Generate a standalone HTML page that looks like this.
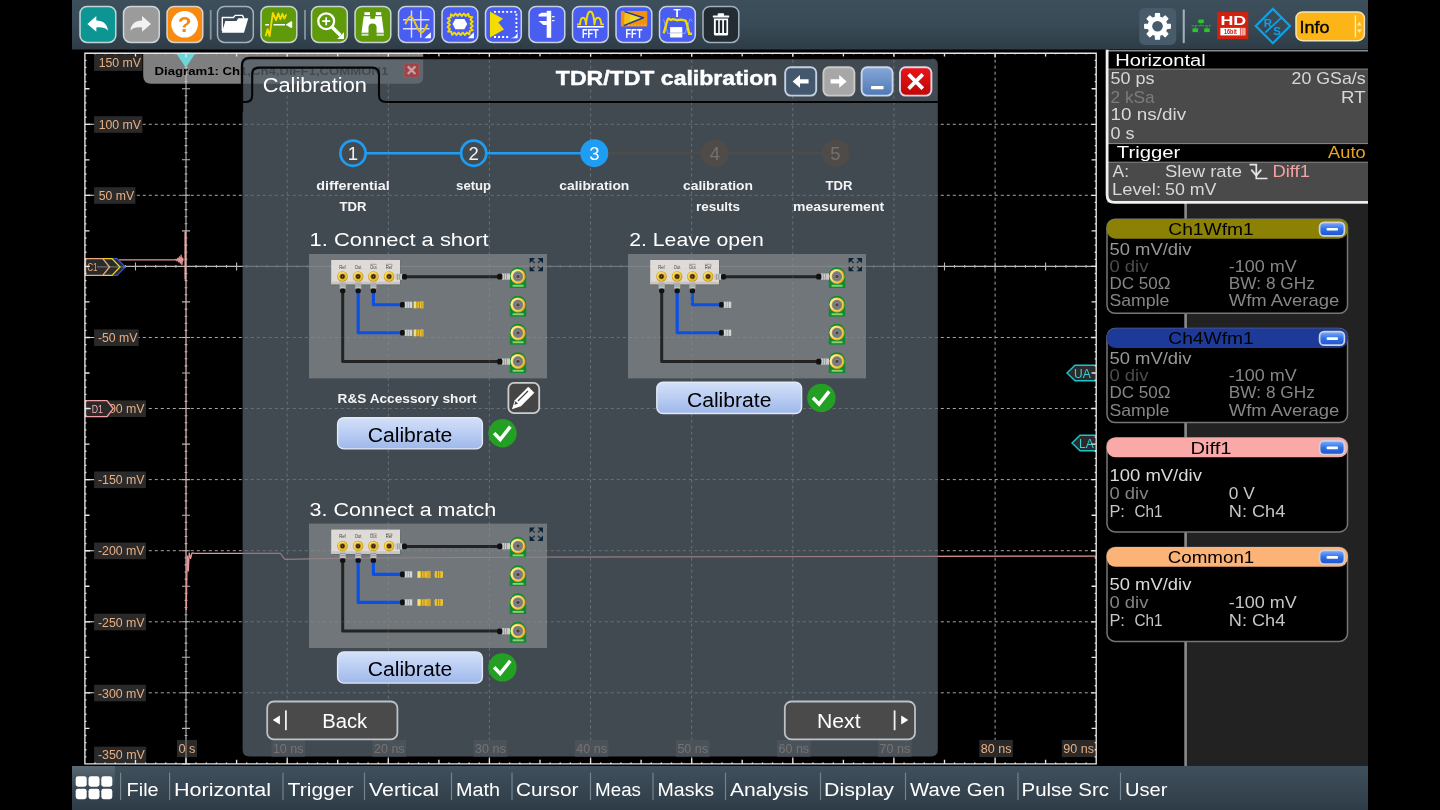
<!DOCTYPE html>
<html><head><meta charset="utf-8"><title>TDR/TDT calibration</title>
<style>
html,body{margin:0;padding:0;background:#000;width:1440px;height:810px;overflow:hidden}
svg{display:block;font-family:"Liberation Sans",sans-serif;will-change:transform}
</style></head><body>
<svg width="1440" height="810" viewBox="0 0 1440 810">

<defs>
<linearGradient id="gTop" x1="0" y1="0" x2="0" y2="1"><stop offset="0" stop-color="#3c4f5b"/><stop offset="0.5" stop-color="#384a56"/><stop offset="1" stop-color="#2e3c47"/></linearGradient>
<linearGradient id="gBot" x1="0" y1="0" x2="0" y2="1"><stop offset="0" stop-color="#3f505c"/><stop offset="1" stop-color="#2e3c47"/></linearGradient>
<linearGradient id="gCal" x1="0" y1="0" x2="0" y2="1"><stop offset="0" stop-color="#d3e0f8"/><stop offset="0.5" stop-color="#b9cdf3"/><stop offset="1" stop-color="#9fb8ea"/></linearGradient>
<linearGradient id="gMinus" x1="0" y1="0" x2="0" y2="1"><stop offset="0" stop-color="#7fb0ff"/><stop offset="0.5" stop-color="#2f6fe8"/><stop offset="1" stop-color="#1f55c8"/></linearGradient>
<linearGradient id="gInfo" x1="0" y1="0" x2="0" y2="1"><stop offset="0" stop-color="#ffc436"/><stop offset="1" stop-color="#f9a512"/></linearGradient>
<linearGradient id="gClose" x1="0" y1="0" x2="0" y2="1"><stop offset="0" stop-color="#ea1616"/><stop offset="1" stop-color="#bf0606"/></linearGradient>
<linearGradient id="gMin" x1="0" y1="0" x2="0" y2="1"><stop offset="0" stop-color="#86a8d8"/><stop offset="1" stop-color="#4f78b4"/></linearGradient>
<radialGradient id="gGold" cx="0.5" cy="0.5" r="0.5"><stop offset="0" stop-color="#3a3020"/><stop offset="0.3" stop-color="#5a4a20"/><stop offset="0.45" stop-color="#f5d060"/><stop offset="0.8" stop-color="#d8a020"/><stop offset="1" stop-color="#8a6a10"/></radialGradient>
<radialGradient id="gGold2" cx="0.5" cy="0.5" r="0.5"><stop offset="0" stop-color="#555"/><stop offset="0.35" stop-color="#8a8a80"/><stop offset="0.5" stop-color="#c8c090"/><stop offset="0.62" stop-color="#f0d868"/><stop offset="0.85" stop-color="#d8b030"/><stop offset="1" stop-color="#907010"/></radialGradient>
<linearGradient id="gHi" x1="0" y1="0" x2="0" y2="1"><stop offset="0" stop-color="#fff" stop-opacity="0.14"/><stop offset="0.25" stop-color="#fff" stop-opacity="0.07"/><stop offset="0.6" stop-color="#fff" stop-opacity="0"/></linearGradient>
</defs>
<rect x="84.9" y="53.2" width="1011.3" height="710.7" fill="#000"/>
<path d="M287.2 53.2 V763.9 M388.3 53.2 V763.9 M489.4 53.2 V763.9 M590.6 53.2 V763.9 M691.7 53.2 V763.9 M792.8 53.2 V763.9 M893.9 53.2 V763.9 M995.1 53.2 V763.9" stroke="#a6a6a6" stroke-width="1" stroke-dasharray="3 3" stroke-dashoffset="5.5" fill="none"/>
<path d="M84.9 124.3 H1096.2 M84.9 195.3 H1096.2 M84.9 337.5 H1096.2 M84.9 408.5 H1096.2 M84.9 479.6 H1096.2 M84.9 550.7 H1096.2 M84.9 621.8 H1096.2 M84.9 692.8 H1096.2" stroke="#a6a6a6" stroke-width="1" stroke-dasharray="3 3" stroke-dashoffset="2.1" fill="none"/>
<path d="M186.0 53.2 V763.9 M84.9 266.4 H1096.2 M84.9 262.4 V270.4 M95.0 265.0 V267.8 M105.1 265.0 V267.8 M115.2 265.0 V267.8 M125.4 265.0 V267.8 M135.5 262.4 V270.4 M145.6 265.0 V267.8 M155.7 265.0 V267.8 M165.8 265.0 V267.8 M175.9 265.0 V267.8 M186.0 262.4 V270.4 M196.1 265.0 V267.8 M206.3 265.0 V267.8 M216.4 265.0 V267.8 M226.5 265.0 V267.8 M236.6 262.4 V270.4 M246.7 265.0 V267.8 M256.8 265.0 V267.8 M266.9 265.0 V267.8 M277.0 265.0 V267.8 M287.2 262.4 V270.4 M297.3 265.0 V267.8 M307.4 265.0 V267.8 M317.5 265.0 V267.8 M327.6 265.0 V267.8 M337.7 262.4 V270.4 M347.8 265.0 V267.8 M358.0 265.0 V267.8 M368.1 265.0 V267.8 M378.2 265.0 V267.8 M388.3 262.4 V270.4 M398.4 265.0 V267.8 M408.5 265.0 V267.8 M418.6 265.0 V267.8 M428.7 265.0 V267.8 M438.9 262.4 V270.4 M449.0 265.0 V267.8 M459.1 265.0 V267.8 M469.2 265.0 V267.8 M479.3 265.0 V267.8 M489.4 262.4 V270.4 M499.5 265.0 V267.8 M509.6 265.0 V267.8 M519.8 265.0 V267.8 M529.9 265.0 V267.8 M540.0 262.4 V270.4 M550.1 265.0 V267.8 M560.2 265.0 V267.8 M570.3 265.0 V267.8 M580.4 265.0 V267.8 M590.6 262.4 V270.4 M600.7 265.0 V267.8 M610.8 265.0 V267.8 M620.9 265.0 V267.8 M631.0 265.0 V267.8 M641.1 262.4 V270.4 M651.2 265.0 V267.8 M661.3 265.0 V267.8 M671.5 265.0 V267.8 M681.6 265.0 V267.8 M691.7 262.4 V270.4 M701.8 265.0 V267.8 M711.9 265.0 V267.8 M722.0 265.0 V267.8 M732.1 265.0 V267.8 M742.2 262.4 V270.4 M752.4 265.0 V267.8 M762.5 265.0 V267.8 M772.6 265.0 V267.8 M782.7 265.0 V267.8 M792.8 262.4 V270.4 M802.9 265.0 V267.8 M813.0 265.0 V267.8 M823.1 265.0 V267.8 M833.3 265.0 V267.8 M843.4 262.4 V270.4 M853.5 265.0 V267.8 M863.6 265.0 V267.8 M873.7 265.0 V267.8 M883.8 265.0 V267.8 M893.9 262.4 V270.4 M904.1 265.0 V267.8 M914.2 265.0 V267.8 M924.3 265.0 V267.8 M934.4 265.0 V267.8 M944.5 262.4 V270.4 M954.6 265.0 V267.8 M964.7 265.0 V267.8 M974.8 265.0 V267.8 M985.0 265.0 V267.8 M995.1 262.4 V270.4 M1005.2 265.0 V267.8 M1015.3 265.0 V267.8 M1025.4 265.0 V267.8 M1035.5 265.0 V267.8 M1045.6 262.4 V270.4 M1055.7 265.0 V267.8 M1065.9 265.0 V267.8 M1076.0 265.0 V267.8 M1086.1 265.0 V267.8 M1096.2 262.4 V270.4 M182.0 53.2 H190.0 M184.6 60.3 H187.4 M184.6 67.4 H187.4 M184.6 74.5 H187.4 M184.6 81.6 H187.4 M182.0 88.7 H190.0 M184.6 95.8 H187.4 M184.6 102.9 H187.4 M184.6 110.1 H187.4 M184.6 117.2 H187.4 M182.0 124.3 H190.0 M184.6 131.4 H187.4 M184.6 138.5 H187.4 M184.6 145.6 H187.4 M184.6 152.7 H187.4 M182.0 159.8 H190.0 M184.6 166.9 H187.4 M184.6 174.0 H187.4 M184.6 181.1 H187.4 M184.6 188.2 H187.4 M182.0 195.3 H190.0 M184.6 202.4 H187.4 M184.6 209.6 H187.4 M184.6 216.7 H187.4 M184.6 223.8 H187.4 M182.0 230.9 H190.0 M184.6 238.0 H187.4 M184.6 245.1 H187.4 M184.6 252.2 H187.4 M184.6 259.3 H187.4 M182.0 266.4 H190.0 M184.6 273.5 H187.4 M184.6 280.6 H187.4 M184.6 287.7 H187.4 M184.6 294.8 H187.4 M182.0 301.9 H190.0 M184.6 309.1 H187.4 M184.6 316.2 H187.4 M184.6 323.3 H187.4 M184.6 330.4 H187.4 M182.0 337.5 H190.0 M184.6 344.6 H187.4 M184.6 351.7 H187.4 M184.6 358.8 H187.4 M184.6 365.9 H187.4 M182.0 373.0 H190.0 M184.6 380.1 H187.4 M184.6 387.2 H187.4 M184.6 394.3 H187.4 M184.6 401.4 H187.4 M182.0 408.5 H190.0 M184.6 415.7 H187.4 M184.6 422.8 H187.4 M184.6 429.9 H187.4 M184.6 437.0 H187.4 M182.0 444.1 H190.0 M184.6 451.2 H187.4 M184.6 458.3 H187.4 M184.6 465.4 H187.4 M184.6 472.5 H187.4 M182.0 479.6 H190.0 M184.6 486.7 H187.4 M184.6 493.8 H187.4 M184.6 500.9 H187.4 M184.6 508.0 H187.4 M182.0 515.2 H190.0 M184.6 522.3 H187.4 M184.6 529.4 H187.4 M184.6 536.5 H187.4 M184.6 543.6 H187.4 M182.0 550.7 H190.0 M184.6 557.8 H187.4 M184.6 564.9 H187.4 M184.6 572.0 H187.4 M184.6 579.1 H187.4 M182.0 586.2 H190.0 M184.6 593.3 H187.4 M184.6 600.4 H187.4 M184.6 607.5 H187.4 M184.6 614.7 H187.4 M182.0 621.8 H190.0 M184.6 628.9 H187.4 M184.6 636.0 H187.4 M184.6 643.1 H187.4 M184.6 650.2 H187.4 M182.0 657.3 H190.0 M184.6 664.4 H187.4 M184.6 671.5 H187.4 M184.6 678.6 H187.4 M184.6 685.7 H187.4 M182.0 692.8 H190.0 M184.6 699.9 H187.4 M184.6 707.0 H187.4 M184.6 714.2 H187.4 M184.6 721.3 H187.4 M182.0 728.4 H190.0 M184.6 735.5 H187.4 M184.6 742.6 H187.4 M184.6 749.7 H187.4 M184.6 756.8 H187.4 M182.0 763.9 H190.0" stroke="#b8b8b8" stroke-width="1.1" fill="none"/>
<path d="M84.9 124.3 h10 M84.9 195.3 h10 M84.9 266.4 h10 M84.9 337.5 h10 M84.9 408.5 h10 M84.9 479.6 h10 M84.9 550.7 h10 M84.9 621.8 h10 M84.9 692.8 h10" stroke="#c8c8c8" stroke-width="1.1" fill="none"/>
<path d="M119 259.9 H175.2 l0.9 -0.5 l0.9 1.4 l0.9 -2.6 l0.8 3.6 l0.8 -5 l0.8 6.4 l0.8 -8 l0.8 9.4 l0.7 -6.6 l0.7 2.6" stroke="#e59696" stroke-width="1.25" fill="none" stroke-linejoin="round"/>
<path d="M185.3 231.5 V279.6" stroke="#eda6a6" stroke-width="1.7" fill="none"/>
<path d="M186.1 232 V610" stroke="#eaa0a0" stroke-width="1.1" fill="none" opacity="0.5"/>
<path d="M186.3 610 L186.9 572 L187.5 556 L188.3 571 L189.2 553 L190.6 558.5 L192 552.8 L194.5 553.3 H280.4 L284.8 559.3 L350 558.2 L540 557.1 L800 556.6 L1096 556" stroke="#e59696" stroke-width="1.25" fill="none" stroke-linejoin="round"/>
<rect x="94.1" y="54.3" width="48.3" height="16.6" fill="#2a2a2a"/>
<text x="98.7" y="67.1" font-size="12.5" fill="#e9ae82" textLength="42.4" lengthAdjust="spacingAndGlyphs">150 mV</text>
<rect x="94.1" y="116.2" width="48.3" height="16.6" fill="#2a2a2a"/>
<text x="98.7" y="129.0" font-size="12.5" fill="#e9ae82" textLength="42.4" lengthAdjust="spacingAndGlyphs">100 mV</text>
<rect x="94.1" y="187.2" width="41.3" height="16.6" fill="#2a2a2a"/>
<text x="98.7" y="200.0" font-size="12.5" fill="#e9ae82" textLength="35.4" lengthAdjust="spacingAndGlyphs">50 mV</text>
<rect x="94.1" y="329.4" width="44.5" height="16.6" fill="#2a2a2a"/>
<text x="97.9" y="342.2" font-size="12.5" fill="#e9ae82" textLength="39.4" lengthAdjust="spacingAndGlyphs">-50 mV</text>
<rect x="94.1" y="400.4" width="51.8" height="16.6" fill="#2a2a2a"/>
<text x="97.9" y="413.2" font-size="12.5" fill="#e9ae82" textLength="46.7" lengthAdjust="spacingAndGlyphs">-100 mV</text>
<rect x="94.1" y="471.5" width="51.8" height="16.6" fill="#2a2a2a"/>
<text x="97.9" y="484.3" font-size="12.5" fill="#e9ae82" textLength="46.7" lengthAdjust="spacingAndGlyphs">-150 mV</text>
<rect x="94.1" y="542.6" width="51.8" height="16.6" fill="#2a2a2a"/>
<text x="97.9" y="555.4" font-size="12.5" fill="#e9ae82" textLength="46.7" lengthAdjust="spacingAndGlyphs">-200 mV</text>
<rect x="94.1" y="613.7" width="51.8" height="16.6" fill="#2a2a2a"/>
<text x="97.9" y="626.5" font-size="12.5" fill="#e9ae82" textLength="46.7" lengthAdjust="spacingAndGlyphs">-250 mV</text>
<rect x="94.1" y="684.7" width="51.8" height="16.6" fill="#2a2a2a"/>
<text x="97.9" y="697.5" font-size="12.5" fill="#e9ae82" textLength="46.7" lengthAdjust="spacingAndGlyphs">-300 mV</text>
<rect x="94.1" y="746.6" width="52.1" height="16.6" fill="#2a2a2a"/>
<text x="97.9" y="759.4" font-size="12.5" fill="#e9ae82" textLength="47" lengthAdjust="spacingAndGlyphs">-350 mV</text>
<rect x="177.0" y="739.9" width="20" height="17.2" fill="#2a2a2a"/>
<text x="187.0" y="753.1" font-size="12.6" fill="#e9ae82" text-anchor="middle" textLength="17" lengthAdjust="spacingAndGlyphs">0 s</text>
<rect x="271.4" y="739.9" width="33.6" height="17.2" fill="#2a2a2a"/>
<text x="288.2" y="753.1" font-size="12.6" fill="#e9ae82" text-anchor="middle" textLength="30.6" lengthAdjust="spacingAndGlyphs">10 ns</text>
<rect x="372.5" y="739.9" width="33.6" height="17.2" fill="#2a2a2a"/>
<text x="389.3" y="753.1" font-size="12.6" fill="#e9ae82" text-anchor="middle" textLength="30.6" lengthAdjust="spacingAndGlyphs">20 ns</text>
<rect x="473.6" y="739.9" width="33.6" height="17.2" fill="#2a2a2a"/>
<text x="490.4" y="753.1" font-size="12.6" fill="#e9ae82" text-anchor="middle" textLength="30.6" lengthAdjust="spacingAndGlyphs">30 ns</text>
<rect x="574.8" y="739.9" width="33.6" height="17.2" fill="#2a2a2a"/>
<text x="591.6" y="753.1" font-size="12.6" fill="#e9ae82" text-anchor="middle" textLength="30.6" lengthAdjust="spacingAndGlyphs">40 ns</text>
<rect x="675.9" y="739.9" width="33.6" height="17.2" fill="#2a2a2a"/>
<text x="692.7" y="753.1" font-size="12.6" fill="#e9ae82" text-anchor="middle" textLength="30.6" lengthAdjust="spacingAndGlyphs">50 ns</text>
<rect x="777.0" y="739.9" width="33.6" height="17.2" fill="#2a2a2a"/>
<text x="793.8" y="753.1" font-size="12.6" fill="#e9ae82" text-anchor="middle" textLength="30.6" lengthAdjust="spacingAndGlyphs">60 ns</text>
<rect x="878.1" y="739.9" width="33.6" height="17.2" fill="#2a2a2a"/>
<text x="894.9" y="753.1" font-size="12.6" fill="#e9ae82" text-anchor="middle" textLength="30.6" lengthAdjust="spacingAndGlyphs">70 ns</text>
<rect x="979.3" y="739.9" width="33.6" height="17.2" fill="#2a2a2a"/>
<text x="996.1" y="753.1" font-size="12.6" fill="#e9ae82" text-anchor="middle" textLength="30.6" lengthAdjust="spacingAndGlyphs">80 ns</text>
<rect x="1061.8" y="739.9" width="33.6" height="17.2" fill="#2a2a2a"/>
<text x="1078.6" y="753.1" font-size="12.6" fill="#e9ae82" text-anchor="middle" textLength="30.6" lengthAdjust="spacingAndGlyphs">90 ns</text>
<path d="M186.0 740 V757" stroke="#b4b4b4" stroke-width="1.1" opacity="0.7"/>
<path d="M112 258.6 H117 L125.2 267 L117 275.4 H112 Z" fill="#2a2a2a" stroke="#2c55d8" stroke-width="1.3"/>
<path d="M102.7 258.6 H112 L120 267 L112 275.4 H102.7 Z" fill="#2a2a2a" stroke="#e8d51c" stroke-width="1.3"/>
<path d="M85.5 258.6 H102.7 L109.6 267 L102.7 275.4 H85.5 Z" fill="#2a2a2a" stroke="#e9a978" stroke-width="1.3"/>
<path d="M97 266.9 H125" stroke="#b8b8b8" stroke-width="1" opacity="0.55"/>
<text x="87.2" y="271.3" font-size="11.6" fill="#e9a978" textLength="10.4" lengthAdjust="spacingAndGlyphs">C1</text>
<path d="M85.5 400.6 H107 L113.2 408.6 L107 416.6 H85.5 Z" fill="#2a2a2a" stroke="#f0a0a6" stroke-width="1.4"/>
<path d="M86 408.6 H91" stroke="#c8c8c8" stroke-width="1"/>
<text x="91.7" y="412.9" font-size="11" fill="#f2aeb2" textLength="11.2" lengthAdjust="spacingAndGlyphs">D1</text>
<path d="M1096 365.3 H1075 L1067 373 L1075 380.8 H1096" fill="#2b2b2b" stroke="#19c6cf" stroke-width="1.4"/>
<text x="1074" y="377.6" font-size="12" fill="#35d3da">UA</text>
<path d="M1096 435.3 H1080 L1072 443 L1080 450.8 H1096" fill="#2b2b2b" stroke="#19c6cf" stroke-width="1.4"/>
<text x="1079" y="447.6" font-size="12" fill="#35d3da">LA</text>
<path d="M143.2 53.2 H423.2 V77 Q423.2 83.7 416.5 83.7 H151.2 Q143.2 83.7 143.2 75.7 Z" fill="#7f7f7f"/>
<path d="M186.0 67 V84 M184.6 60.3 h2.8 M184.6 67.4 h2.8 M184.6 74.5 h2.8 M184.6 81.6 h2.8" stroke="#c4c4c4" stroke-width="1"/>
<path d="M176.2 53.2 H195.4 L185.8 67.8 Z" fill="#6ed6d6"/>
<text x="154.6" y="74.6" font-size="10.2" fill="#000" font-weight="bold" textLength="233.6" lengthAdjust="spacingAndGlyphs">Diagram1: Ch1,Ch4,DIFF1,COMMON1</text>
<rect x="404.2" y="63" width="14.8" height="14.4" rx="2" fill="#d63030" stroke="#ec9090" stroke-width="0.9"/>
<path d="M407.8 66.4 l7.6 7.6 M415.4 66.4 l-7.6 7.6" stroke="#fff" stroke-width="2.2"/>
<path d="M84.9 53.2 H1096.2 V763.9 H84.9 Z M84.9 763.9 v-5.7 M84.9 53.2 v4.3 M95.0 763.9 v-1.3 M95.0 53.2 v1.0 M105.1 763.9 v-1.3 M105.1 53.2 v1.0 M115.2 763.9 v-1.3 M115.2 53.2 v1.0 M125.4 763.9 v-1.3 M125.4 53.2 v1.0 M135.5 763.9 v-4.2 M135.5 53.2 v3.2 M145.6 763.9 v-1.3 M145.6 53.2 v1.0 M155.7 763.9 v-1.3 M155.7 53.2 v1.0 M165.8 763.9 v-1.3 M165.8 53.2 v1.0 M175.9 763.9 v-1.3 M175.9 53.2 v1.0 M186.0 763.9 v-5.7 M186.0 53.2 v4.3 M196.1 763.9 v-1.3 M196.1 53.2 v1.0 M206.3 763.9 v-1.3 M206.3 53.2 v1.0 M216.4 763.9 v-1.3 M216.4 53.2 v1.0 M226.5 763.9 v-1.3 M226.5 53.2 v1.0 M236.6 763.9 v-4.2 M236.6 53.2 v3.2 M246.7 763.9 v-1.3 M246.7 53.2 v1.0 M256.8 763.9 v-1.3 M256.8 53.2 v1.0 M266.9 763.9 v-1.3 M266.9 53.2 v1.0 M277.0 763.9 v-1.3 M277.0 53.2 v1.0 M287.2 763.9 v-5.7 M287.2 53.2 v4.3 M297.3 763.9 v-1.3 M297.3 53.2 v1.0 M307.4 763.9 v-1.3 M307.4 53.2 v1.0 M317.5 763.9 v-1.3 M317.5 53.2 v1.0 M327.6 763.9 v-1.3 M327.6 53.2 v1.0 M337.7 763.9 v-4.2 M337.7 53.2 v3.2 M347.8 763.9 v-1.3 M347.8 53.2 v1.0 M358.0 763.9 v-1.3 M358.0 53.2 v1.0 M368.1 763.9 v-1.3 M368.1 53.2 v1.0 M378.2 763.9 v-1.3 M378.2 53.2 v1.0 M388.3 763.9 v-5.7 M388.3 53.2 v4.3 M398.4 763.9 v-1.3 M398.4 53.2 v1.0 M408.5 763.9 v-1.3 M408.5 53.2 v1.0 M418.6 763.9 v-1.3 M418.6 53.2 v1.0 M428.7 763.9 v-1.3 M428.7 53.2 v1.0 M438.9 763.9 v-4.2 M438.9 53.2 v3.2 M449.0 763.9 v-1.3 M449.0 53.2 v1.0 M459.1 763.9 v-1.3 M459.1 53.2 v1.0 M469.2 763.9 v-1.3 M469.2 53.2 v1.0 M479.3 763.9 v-1.3 M479.3 53.2 v1.0 M489.4 763.9 v-5.7 M489.4 53.2 v4.3 M499.5 763.9 v-1.3 M499.5 53.2 v1.0 M509.6 763.9 v-1.3 M509.6 53.2 v1.0 M519.8 763.9 v-1.3 M519.8 53.2 v1.0 M529.9 763.9 v-1.3 M529.9 53.2 v1.0 M540.0 763.9 v-4.2 M540.0 53.2 v3.2 M550.1 763.9 v-1.3 M550.1 53.2 v1.0 M560.2 763.9 v-1.3 M560.2 53.2 v1.0 M570.3 763.9 v-1.3 M570.3 53.2 v1.0 M580.4 763.9 v-1.3 M580.4 53.2 v1.0 M590.6 763.9 v-5.7 M590.6 53.2 v4.3 M600.7 763.9 v-1.3 M600.7 53.2 v1.0 M610.8 763.9 v-1.3 M610.8 53.2 v1.0 M620.9 763.9 v-1.3 M620.9 53.2 v1.0 M631.0 763.9 v-1.3 M631.0 53.2 v1.0 M641.1 763.9 v-4.2 M641.1 53.2 v3.2 M651.2 763.9 v-1.3 M651.2 53.2 v1.0 M661.3 763.9 v-1.3 M661.3 53.2 v1.0 M671.5 763.9 v-1.3 M671.5 53.2 v1.0 M681.6 763.9 v-1.3 M681.6 53.2 v1.0 M691.7 763.9 v-5.7 M691.7 53.2 v4.3 M701.8 763.9 v-1.3 M701.8 53.2 v1.0 M711.9 763.9 v-1.3 M711.9 53.2 v1.0 M722.0 763.9 v-1.3 M722.0 53.2 v1.0 M732.1 763.9 v-1.3 M732.1 53.2 v1.0 M742.2 763.9 v-4.2 M742.2 53.2 v3.2 M752.4 763.9 v-1.3 M752.4 53.2 v1.0 M762.5 763.9 v-1.3 M762.5 53.2 v1.0 M772.6 763.9 v-1.3 M772.6 53.2 v1.0 M782.7 763.9 v-1.3 M782.7 53.2 v1.0 M792.8 763.9 v-5.7 M792.8 53.2 v4.3 M802.9 763.9 v-1.3 M802.9 53.2 v1.0 M813.0 763.9 v-1.3 M813.0 53.2 v1.0 M823.1 763.9 v-1.3 M823.1 53.2 v1.0 M833.3 763.9 v-1.3 M833.3 53.2 v1.0 M843.4 763.9 v-4.2 M843.4 53.2 v3.2 M853.5 763.9 v-1.3 M853.5 53.2 v1.0 M863.6 763.9 v-1.3 M863.6 53.2 v1.0 M873.7 763.9 v-1.3 M873.7 53.2 v1.0 M883.8 763.9 v-1.3 M883.8 53.2 v1.0 M893.9 763.9 v-5.7 M893.9 53.2 v4.3 M904.1 763.9 v-1.3 M904.1 53.2 v1.0 M914.2 763.9 v-1.3 M914.2 53.2 v1.0 M924.3 763.9 v-1.3 M924.3 53.2 v1.0 M934.4 763.9 v-1.3 M934.4 53.2 v1.0 M944.5 763.9 v-4.2 M944.5 53.2 v3.2 M954.6 763.9 v-1.3 M954.6 53.2 v1.0 M964.7 763.9 v-1.3 M964.7 53.2 v1.0 M974.8 763.9 v-1.3 M974.8 53.2 v1.0 M985.0 763.9 v-1.3 M985.0 53.2 v1.0 M995.1 763.9 v-5.7 M995.1 53.2 v4.3 M1005.2 763.9 v-1.3 M1005.2 53.2 v1.0 M1015.3 763.9 v-1.3 M1015.3 53.2 v1.0 M1025.4 763.9 v-1.3 M1025.4 53.2 v1.0 M1035.5 763.9 v-1.3 M1035.5 53.2 v1.0 M1045.6 763.9 v-4.2 M1045.6 53.2 v3.2 M1055.7 763.9 v-1.3 M1055.7 53.2 v1.0 M1065.9 763.9 v-1.3 M1065.9 53.2 v1.0 M1076.0 763.9 v-1.3 M1076.0 53.2 v1.0 M1086.1 763.9 v-1.3 M1086.1 53.2 v1.0 M1096.2 763.9 v-5.7 M1096.2 53.2 v4.3 M84.9 53.2 h5 M1096.2 53.2 h-5 M84.9 60.3 h1.5 M1096.2 60.3 h-1.5 M84.9 67.4 h1.5 M1096.2 67.4 h-1.5 M84.9 74.5 h1.5 M1096.2 74.5 h-1.5 M84.9 81.6 h1.5 M1096.2 81.6 h-1.5 M84.9 88.7 h4.6 M1096.2 88.7 h-4.6 M84.9 95.8 h1.5 M1096.2 95.8 h-1.5 M84.9 102.9 h1.5 M1096.2 102.9 h-1.5 M84.9 110.1 h1.5 M1096.2 110.1 h-1.5 M84.9 117.2 h1.5 M1096.2 117.2 h-1.5 M84.9 124.3 h5 M1096.2 124.3 h-5 M84.9 131.4 h1.5 M1096.2 131.4 h-1.5 M84.9 138.5 h1.5 M1096.2 138.5 h-1.5 M84.9 145.6 h1.5 M1096.2 145.6 h-1.5 M84.9 152.7 h1.5 M1096.2 152.7 h-1.5 M84.9 159.8 h4.6 M1096.2 159.8 h-4.6 M84.9 166.9 h1.5 M1096.2 166.9 h-1.5 M84.9 174.0 h1.5 M1096.2 174.0 h-1.5 M84.9 181.1 h1.5 M1096.2 181.1 h-1.5 M84.9 188.2 h1.5 M1096.2 188.2 h-1.5 M84.9 195.3 h5 M1096.2 195.3 h-5 M84.9 202.4 h1.5 M1096.2 202.4 h-1.5 M84.9 209.6 h1.5 M1096.2 209.6 h-1.5 M84.9 216.7 h1.5 M1096.2 216.7 h-1.5 M84.9 223.8 h1.5 M1096.2 223.8 h-1.5 M84.9 230.9 h4.6 M1096.2 230.9 h-4.6 M84.9 238.0 h1.5 M1096.2 238.0 h-1.5 M84.9 245.1 h1.5 M1096.2 245.1 h-1.5 M84.9 252.2 h1.5 M1096.2 252.2 h-1.5 M84.9 259.3 h1.5 M1096.2 259.3 h-1.5 M84.9 266.4 h5 M1096.2 266.4 h-5 M84.9 273.5 h1.5 M1096.2 273.5 h-1.5 M84.9 280.6 h1.5 M1096.2 280.6 h-1.5 M84.9 287.7 h1.5 M1096.2 287.7 h-1.5 M84.9 294.8 h1.5 M1096.2 294.8 h-1.5 M84.9 301.9 h4.6 M1096.2 301.9 h-4.6 M84.9 309.1 h1.5 M1096.2 309.1 h-1.5 M84.9 316.2 h1.5 M1096.2 316.2 h-1.5 M84.9 323.3 h1.5 M1096.2 323.3 h-1.5 M84.9 330.4 h1.5 M1096.2 330.4 h-1.5 M84.9 337.5 h5 M1096.2 337.5 h-5 M84.9 344.6 h1.5 M1096.2 344.6 h-1.5 M84.9 351.7 h1.5 M1096.2 351.7 h-1.5 M84.9 358.8 h1.5 M1096.2 358.8 h-1.5 M84.9 365.9 h1.5 M1096.2 365.9 h-1.5 M84.9 373.0 h4.6 M1096.2 373.0 h-4.6 M84.9 380.1 h1.5 M1096.2 380.1 h-1.5 M84.9 387.2 h1.5 M1096.2 387.2 h-1.5 M84.9 394.3 h1.5 M1096.2 394.3 h-1.5 M84.9 401.4 h1.5 M1096.2 401.4 h-1.5 M84.9 408.5 h5 M1096.2 408.5 h-5 M84.9 415.7 h1.5 M1096.2 415.7 h-1.5 M84.9 422.8 h1.5 M1096.2 422.8 h-1.5 M84.9 429.9 h1.5 M1096.2 429.9 h-1.5 M84.9 437.0 h1.5 M1096.2 437.0 h-1.5 M84.9 444.1 h4.6 M1096.2 444.1 h-4.6 M84.9 451.2 h1.5 M1096.2 451.2 h-1.5 M84.9 458.3 h1.5 M1096.2 458.3 h-1.5 M84.9 465.4 h1.5 M1096.2 465.4 h-1.5 M84.9 472.5 h1.5 M1096.2 472.5 h-1.5 M84.9 479.6 h5 M1096.2 479.6 h-5 M84.9 486.7 h1.5 M1096.2 486.7 h-1.5 M84.9 493.8 h1.5 M1096.2 493.8 h-1.5 M84.9 500.9 h1.5 M1096.2 500.9 h-1.5 M84.9 508.0 h1.5 M1096.2 508.0 h-1.5 M84.9 515.2 h4.6 M1096.2 515.2 h-4.6 M84.9 522.3 h1.5 M1096.2 522.3 h-1.5 M84.9 529.4 h1.5 M1096.2 529.4 h-1.5 M84.9 536.5 h1.5 M1096.2 536.5 h-1.5 M84.9 543.6 h1.5 M1096.2 543.6 h-1.5 M84.9 550.7 h5 M1096.2 550.7 h-5 M84.9 557.8 h1.5 M1096.2 557.8 h-1.5 M84.9 564.9 h1.5 M1096.2 564.9 h-1.5 M84.9 572.0 h1.5 M1096.2 572.0 h-1.5 M84.9 579.1 h1.5 M1096.2 579.1 h-1.5 M84.9 586.2 h4.6 M1096.2 586.2 h-4.6 M84.9 593.3 h1.5 M1096.2 593.3 h-1.5 M84.9 600.4 h1.5 M1096.2 600.4 h-1.5 M84.9 607.5 h1.5 M1096.2 607.5 h-1.5 M84.9 614.7 h1.5 M1096.2 614.7 h-1.5 M84.9 621.8 h5 M1096.2 621.8 h-5 M84.9 628.9 h1.5 M1096.2 628.9 h-1.5 M84.9 636.0 h1.5 M1096.2 636.0 h-1.5 M84.9 643.1 h1.5 M1096.2 643.1 h-1.5 M84.9 650.2 h1.5 M1096.2 650.2 h-1.5 M84.9 657.3 h4.6 M1096.2 657.3 h-4.6 M84.9 664.4 h1.5 M1096.2 664.4 h-1.5 M84.9 671.5 h1.5 M1096.2 671.5 h-1.5 M84.9 678.6 h1.5 M1096.2 678.6 h-1.5 M84.9 685.7 h1.5 M1096.2 685.7 h-1.5 M84.9 692.8 h5 M1096.2 692.8 h-5 M84.9 699.9 h1.5 M1096.2 699.9 h-1.5 M84.9 707.0 h1.5 M1096.2 707.0 h-1.5 M84.9 714.2 h1.5 M1096.2 714.2 h-1.5 M84.9 721.3 h1.5 M1096.2 721.3 h-1.5 M84.9 728.4 h4.6 M1096.2 728.4 h-4.6 M84.9 735.5 h1.5 M1096.2 735.5 h-1.5 M84.9 742.6 h1.5 M1096.2 742.6 h-1.5 M84.9 749.7 h1.5 M1096.2 749.7 h-1.5 M84.9 756.8 h1.5 M1096.2 756.8 h-1.5 M84.9 763.9 h5 M1096.2 763.9 h-5" stroke="#e6e6e6" stroke-width="1.35" fill="none"/><rect x="1186" y="204" width="182" height="563" fill="#222222"/>
<rect x="1184.3" y="203" width="2.6" height="564" fill="#8a8a8a"/>
<rect x="1107.0" y="50.5" width="261.0" height="152" fill="#4a4a4a"/>
<rect x="1107.0" y="50.5" width="261.0" height="18.6" fill="#000"/>
<rect x="1107.0" y="143.6" width="261.0" height="18.6" fill="#000"/>
<path d="M1107.0 69.1 H1368 M1107.0 143.6 H1368 M1107.0 162.2 H1368" stroke="#8c8c8c" stroke-width="1" fill="none"/>
<path d="M1107.0 50.8 H1368" stroke="#8a8a8a" stroke-width="1.4" fill="none"/>
<path d="M1107.1 49.6 V195 Q1107.1 202.4 1114.6 202.4 H1368" stroke="#f0f0f0" stroke-width="2.8" fill="none"/>
<text x="1115.2" y="65.9" font-size="17.4" fill="#fff" textLength="90.5" lengthAdjust="spacingAndGlyphs">Horizontal</text>
<text x="1110.6" y="84.3" font-size="16.6" fill="#d8d8d8" textLength="44" lengthAdjust="spacingAndGlyphs">50 ps</text>
<text x="1365.6" y="84.3" font-size="16.6" fill="#d8d8d8" text-anchor="end" textLength="74" lengthAdjust="spacingAndGlyphs">20 GSa/s</text>
<text x="1110.6" y="102.6" font-size="16.6" fill="#7c7c7c" textLength="44" lengthAdjust="spacingAndGlyphs">2 kSa</text>
<text x="1365.6" y="102.6" font-size="16.6" fill="#d8d8d8" text-anchor="end" textLength="24.5" lengthAdjust="spacingAndGlyphs">RT</text>
<text x="1110.6" y="120.4" font-size="16.6" fill="#d8d8d8" textLength="75.5" lengthAdjust="spacingAndGlyphs">10 ns/div</text>
<text x="1110.6" y="138.6" font-size="16.6" fill="#d8d8d8" textLength="24" lengthAdjust="spacingAndGlyphs">0 s</text>
<text x="1116.8" y="158.3" font-size="17.4" fill="#fff" textLength="63.5" lengthAdjust="spacingAndGlyphs">Trigger</text>
<text x="1365.6" y="158.2" font-size="16.6" fill="#eaa51e" text-anchor="end" textLength="37.5" lengthAdjust="spacingAndGlyphs">Auto</text>
<text x="1112.6" y="177.4" font-size="16.6" fill="#d8d8d8" textLength="16.5" lengthAdjust="spacingAndGlyphs">A:</text>
<text x="1165" y="177.4" font-size="16.6" fill="#d8d8d8" textLength="77" lengthAdjust="spacingAndGlyphs">Slew rate</text>
<path d="M1249.5 164.6 H1256.3 V178.5 H1267.5" stroke="#e8e8e8" stroke-width="1.7" fill="none"/>
<path d="M1251.3 169.6 L1256.3 175.6 L1261.3 169.6" stroke="#e8e8e8" stroke-width="1.7" fill="none"/>
<text x="1272.4" y="177.4" font-size="16.6" fill="#f2a2a2" textLength="37.5" lengthAdjust="spacingAndGlyphs">Diff1</text>
<text x="1112" y="195.2" font-size="16.6" fill="#d8d8d8" textLength="49" lengthAdjust="spacingAndGlyphs">Level:</text>
<text x="1165" y="195.2" font-size="16.6" fill="#d8d8d8" textLength="51.5" lengthAdjust="spacingAndGlyphs">50 mV</text>
<rect x="1107.0" y="219.3" width="240.5" height="94.0" rx="8" fill="#000" stroke="#767676" stroke-width="1.5"/>
<rect x="1106.6" y="218.9" width="241.3" height="19.8" rx="9" fill="#8b8205"/>
<text x="1211" y="235.10000000000002" font-size="16.8" fill="#000" text-anchor="middle" textLength="85.5" lengthAdjust="spacingAndGlyphs">Ch1Wfm1</text>
<rect x="1319.6" y="222.3" width="24.8" height="13.6" rx="4.5" fill="url(#gMinus)" stroke="#cfd2d8" stroke-width="1.7"/>
<rect x="1326.6" y="228.0" width="11.4" height="2.6" rx="0.8" fill="#fff"/>
<text x="1109.4" y="254.9" font-size="16.6" fill="#989898" textLength="82" lengthAdjust="spacingAndGlyphs">50 mV/div</text>
<text x="1109.4" y="272.1" font-size="16.6" fill="#4c4c4c" textLength="39" lengthAdjust="spacingAndGlyphs">0 div</text>
<text x="1228.8" y="272.1" font-size="16.6" fill="#868686" textLength="68" lengthAdjust="spacingAndGlyphs">-100 mV</text>
<text x="1109.4" y="289.1" font-size="16.6" fill="#868686" textLength="61" lengthAdjust="spacingAndGlyphs">DC 50Ω</text>
<text x="1228.8" y="289.1" font-size="16.6" fill="#868686" textLength="86" lengthAdjust="spacingAndGlyphs">BW: 8 GHz</text>
<text x="1109.4" y="306.3" font-size="16.6" fill="#868686" textLength="60" lengthAdjust="spacingAndGlyphs">Sample</text>
<text x="1228.8" y="306.3" font-size="16.6" fill="#868686" textLength="110.5" lengthAdjust="spacingAndGlyphs">Wfm Average</text>
<rect x="1107.0" y="328.6" width="240.5" height="94.0" rx="8" fill="#000" stroke="#767676" stroke-width="1.5"/>
<rect x="1106.6" y="328.20000000000005" width="241.3" height="19.8" rx="9" fill="#1d3a98"/>
<text x="1211" y="344.40000000000003" font-size="16.8" fill="#000" text-anchor="middle" textLength="85.5" lengthAdjust="spacingAndGlyphs">Ch4Wfm1</text>
<rect x="1319.6" y="331.6" width="24.8" height="13.6" rx="4.5" fill="url(#gMinus)" stroke="#cfd2d8" stroke-width="1.7"/>
<rect x="1326.6" y="337.3" width="11.4" height="2.6" rx="0.8" fill="#fff"/>
<text x="1109.4" y="364.20000000000005" font-size="16.6" fill="#989898" textLength="82" lengthAdjust="spacingAndGlyphs">50 mV/div</text>
<text x="1109.4" y="381.40000000000003" font-size="16.6" fill="#4c4c4c" textLength="39" lengthAdjust="spacingAndGlyphs">0 div</text>
<text x="1228.8" y="381.40000000000003" font-size="16.6" fill="#868686" textLength="68" lengthAdjust="spacingAndGlyphs">-100 mV</text>
<text x="1109.4" y="398.40000000000003" font-size="16.6" fill="#868686" textLength="61" lengthAdjust="spacingAndGlyphs">DC 50Ω</text>
<text x="1228.8" y="398.40000000000003" font-size="16.6" fill="#868686" textLength="86" lengthAdjust="spacingAndGlyphs">BW: 8 GHz</text>
<text x="1109.4" y="415.6" font-size="16.6" fill="#868686" textLength="60" lengthAdjust="spacingAndGlyphs">Sample</text>
<text x="1228.8" y="415.6" font-size="16.6" fill="#868686" textLength="110.5" lengthAdjust="spacingAndGlyphs">Wfm Average</text>
<rect x="1107.0" y="437.9" width="240.5" height="94.0" rx="8" fill="#000" stroke="#767676" stroke-width="1.5"/>
<rect x="1106.6" y="437.5" width="241.3" height="19.8" rx="9" fill="#faa9a9"/>
<text x="1211" y="453.7" font-size="16.8" fill="#000" text-anchor="middle" textLength="41" lengthAdjust="spacingAndGlyphs">Diff1</text>
<rect x="1319.6" y="440.9" width="24.8" height="13.6" rx="4.5" fill="url(#gMinus)" stroke="#cfd2d8" stroke-width="1.7"/>
<rect x="1326.6" y="446.59999999999997" width="11.4" height="2.6" rx="0.8" fill="#fff"/>
<text x="1109.4" y="481.09999999999997" font-size="16.6" fill="#dadada" textLength="92.5" lengthAdjust="spacingAndGlyphs">100 mV/div</text>
<text x="1109.4" y="498.9" font-size="16.6" fill="#848484" textLength="39" lengthAdjust="spacingAndGlyphs">0 div</text>
<text x="1228.8" y="498.9" font-size="16.6" fill="#c6c6c6" textLength="26" lengthAdjust="spacingAndGlyphs">0 V</text>
<text x="1109.4" y="516.6999999999999" font-size="16.6" fill="#c6c6c6" textLength="15.5" lengthAdjust="spacingAndGlyphs">P:</text>
<text x="1134.6" y="516.6999999999999" font-size="16.6" fill="#c6c6c6" textLength="28" lengthAdjust="spacingAndGlyphs">Ch1</text>
<text x="1228.8" y="516.6999999999999" font-size="16.6" fill="#c6c6c6" textLength="56.5" lengthAdjust="spacingAndGlyphs">N: Ch4</text>
<rect x="1107.0" y="547.4" width="240.5" height="94.0" rx="8" fill="#000" stroke="#767676" stroke-width="1.5"/>
<rect x="1106.6" y="547.0" width="241.3" height="19.8" rx="9" fill="#fbb378"/>
<text x="1211" y="563.1999999999999" font-size="16.8" fill="#000" text-anchor="middle" textLength="86.5" lengthAdjust="spacingAndGlyphs">Common1</text>
<rect x="1319.6" y="550.4" width="24.8" height="13.6" rx="4.5" fill="url(#gMinus)" stroke="#cfd2d8" stroke-width="1.7"/>
<rect x="1326.6" y="556.1" width="11.4" height="2.6" rx="0.8" fill="#fff"/>
<text x="1109.4" y="589.8" font-size="16.6" fill="#dadada" textLength="82" lengthAdjust="spacingAndGlyphs">50 mV/div</text>
<text x="1109.4" y="607.8" font-size="16.6" fill="#848484" textLength="39" lengthAdjust="spacingAndGlyphs">0 div</text>
<text x="1228.8" y="607.8" font-size="16.6" fill="#c6c6c6" textLength="68" lengthAdjust="spacingAndGlyphs">-100 mV</text>
<text x="1109.4" y="625.8" font-size="16.6" fill="#c6c6c6" textLength="15.5" lengthAdjust="spacingAndGlyphs">P:</text>
<text x="1134.6" y="625.8" font-size="16.6" fill="#c6c6c6" textLength="28" lengthAdjust="spacingAndGlyphs">Ch1</text>
<text x="1228.8" y="625.8" font-size="16.6" fill="#c6c6c6" textLength="56.5" lengthAdjust="spacingAndGlyphs">N: Ch4</text><path d="M242.6 65.6 Q242.6 58.6 249.6 58.6 H931.8 Q937.8 58.6 937.8 64.6 V749.6 Q937.8 756.6 930.8 756.6 H249.6 Q242.6 756.6 242.6 749.6 Z" fill="#555f69" fill-opacity="0.77"/>
<path d="M242.0 112 V65.6 Q242.0 58.0 249.6 58.0 H931.8" stroke="#050505" stroke-width="2.3" fill="none"/>
<path d="M242.6 102 H246 Q252.2 102 252.2 95 V74.5 Q252.2 67.6 259.5 67.6 H372 Q379 67.6 379 74.5 V95 Q379 102 386 102 H937.8" stroke="#050505" stroke-width="2.1" fill="none"/>
<text x="262.7" y="91.8" font-size="19.5" fill="#fff" textLength="104.2" lengthAdjust="spacingAndGlyphs">Calibration</text>
<text x="555.8" y="85.2" font-size="20.4" fill="#fff" font-weight="bold" textLength="221.6" lengthAdjust="spacingAndGlyphs" stroke="#fff" stroke-width="0.45">TDR/TDT calibration</text>
<rect x="785.2" y="67.2" width="31" height="28.4" rx="5.5" fill="#43586d" stroke="#c3d0e4" stroke-width="1.9"/>
<path d="M792.6 81.4 L800 75 V79.2 H808.6 V83.6 H800 V87.8 Z" fill="#fff"/>
<rect x="823.4" y="67.2" width="31" height="28.4" rx="5.5" fill="#a7a7a7" stroke="#c9c9c9" stroke-width="1.9"/>
<path d="M846.6 81.4 L839.2 75 V79.2 H830.6 V83.6 H839.2 V87.8 Z" fill="#fff"/>
<rect x="861.6" y="67.2" width="31" height="28.4" rx="5.5" fill="url(#gMin)" stroke="#c9d7ec" stroke-width="1.9"/>
<rect x="871" y="86" width="12.6" height="3.2" rx="0.8" fill="#fff"/>
<rect x="900" y="67.2" width="31.4" height="28.4" rx="5.5" fill="url(#gClose)" stroke="#ddd6ea" stroke-width="1.9"/>
<path d="M908.6 74.4 L922.8 88.6 M922.8 74.4 L908.6 88.6" stroke="#fff" stroke-width="3.7"/>
<path d="M594.3 153.2 H835.5" stroke="#524c46" stroke-width="2"/>
<path d="M353 153.2 H594.3" stroke="#1e9df2" stroke-width="2.6"/>
<circle cx="353" cy="153.2" r="12.6" fill="#434b51" stroke="#1e9df2" stroke-width="2.7"/>
<text x="353" y="159.79999999999998" font-size="18.5" fill="#f0f0f0" text-anchor="middle">1</text>
<circle cx="473.7" cy="153.2" r="12.6" fill="#434b51" stroke="#1e9df2" stroke-width="2.7"/>
<text x="473.7" y="159.79999999999998" font-size="18.5" fill="#f0f0f0" text-anchor="middle">2</text>
<circle cx="594.3" cy="153.2" r="14" fill="#1e9df2"/>
<text x="594.3" y="159.79999999999998" font-size="18.5" fill="#fff" text-anchor="middle">3</text>
<circle cx="714.9" cy="153.2" r="14" fill="#4e4b48"/>
<text x="714.9" y="159.79999999999998" font-size="18.5" fill="#74726f" text-anchor="middle">4</text>
<circle cx="835.5" cy="153.2" r="14" fill="#4e4b48"/>
<text x="835.5" y="159.79999999999998" font-size="18.5" fill="#74726f" text-anchor="middle">5</text>
<text x="353" y="190.2" font-size="13.2" fill="#f4f4f4" font-weight="bold" text-anchor="middle" textLength="73.5" lengthAdjust="spacingAndGlyphs">differential</text>
<text x="353" y="211.4" font-size="13.2" fill="#f4f4f4" font-weight="bold" text-anchor="middle" textLength="27" lengthAdjust="spacingAndGlyphs">TDR</text>
<text x="473.6" y="190.2" font-size="13.2" fill="#f4f4f4" font-weight="bold" text-anchor="middle" textLength="35" lengthAdjust="spacingAndGlyphs">setup</text>
<text x="594.3" y="190.2" font-size="13.2" fill="#f4f4f4" font-weight="bold" text-anchor="middle" textLength="70" lengthAdjust="spacingAndGlyphs">calibration</text>
<text x="718" y="190.2" font-size="13.2" fill="#f4f4f4" font-weight="bold" text-anchor="middle" textLength="70" lengthAdjust="spacingAndGlyphs">calibration</text>
<text x="718" y="211.4" font-size="13.2" fill="#f4f4f4" font-weight="bold" text-anchor="middle" textLength="44" lengthAdjust="spacingAndGlyphs">results</text>
<text x="839" y="190.2" font-size="13.2" fill="#f4f4f4" font-weight="bold" text-anchor="middle" textLength="27" lengthAdjust="spacingAndGlyphs">TDR</text>
<text x="838.6" y="211.4" font-size="13.2" fill="#f4f4f4" font-weight="bold" text-anchor="middle" textLength="91" lengthAdjust="spacingAndGlyphs">measurement</text>
<text x="309.6" y="246.2" font-size="19" fill="#fff" textLength="179" lengthAdjust="spacingAndGlyphs">1. Connect a short</text>
<text x="629.2" y="246.2" font-size="19" fill="#fff" textLength="134.6" lengthAdjust="spacingAndGlyphs">2. Leave open</text>
<text x="309.6" y="515.6" font-size="19" fill="#fff" textLength="186.6" lengthAdjust="spacingAndGlyphs">3. Connect a match</text>
<g transform="translate(309,254)">
<rect x="0" y="0" width="238" height="124.4" fill="#70767a"/>
<path d="M97 22.8 H190" stroke="#232323" stroke-width="3" fill="none"/>
<path d="M33.7 38 V107.4 H190" stroke="#232323" stroke-width="3" fill="none" stroke-linejoin="round"/>
<path d="M64.4 38 V50.8 H92" stroke="#0b50e6" stroke-width="3.1" fill="none" stroke-linejoin="round"/>
<path d="M49.2 38 V78.8 H92" stroke="#0b50e6" stroke-width="3.1" fill="none" stroke-linejoin="round"/>
<rect x="22.6" y="7" width="69" height="24.4" fill="#5c6164" opacity="0.55"/>
<rect x="22.2" y="6" width="68.8" height="24.2" fill="#dedbd7"/>
<rect x="22.2" y="27.6" width="68.8" height="2.6" fill="#c9c6c1"/>
<text x="33.5" y="14.8" font-size="4.6" fill="#3c3c3c" text-anchor="middle" textLength="6.6" lengthAdjust="spacingAndGlyphs">Ref</text>
<circle cx="33.5" cy="22.5" r="5.3" fill="#c9961a"/>
<circle cx="33.3" cy="22.3" r="4.7" fill="#f3c832"/>
<circle cx="33.0" cy="21.9" r="3.6" fill="#f7e27a"/>
<circle cx="33.5" cy="22.5" r="3.1" fill="#c28f18"/>
<circle cx="33.5" cy="22.5" r="2.2" fill="#2c2418"/>
<circle cx="33.5" cy="22.5" r="0.7" fill="#8a7a4a"/>
<text x="49.1" y="14.8" font-size="4.6" fill="#3c3c3c" text-anchor="middle" textLength="6.6" lengthAdjust="spacingAndGlyphs">Out</text>
<circle cx="49.1" cy="22.5" r="5.3" fill="#c9961a"/>
<circle cx="48.9" cy="22.3" r="4.7" fill="#f3c832"/>
<circle cx="48.6" cy="21.9" r="3.6" fill="#f7e27a"/>
<circle cx="49.1" cy="22.5" r="3.1" fill="#c28f18"/>
<circle cx="49.1" cy="22.5" r="2.2" fill="#2c2418"/>
<circle cx="49.1" cy="22.5" r="0.7" fill="#8a7a4a"/>
<text x="64.4" y="14.8" font-size="4.6" fill="#3c3c3c" text-anchor="middle" textLength="6.6" lengthAdjust="spacingAndGlyphs">Out</text>
<path d="M61.2 10.3 h6.4" stroke="#555" stroke-width="0.45"/>
<circle cx="64.4" cy="22.5" r="5.3" fill="#c9961a"/>
<circle cx="64.2" cy="22.3" r="4.7" fill="#f3c832"/>
<circle cx="63.900000000000006" cy="21.9" r="3.6" fill="#f7e27a"/>
<circle cx="64.4" cy="22.5" r="3.1" fill="#c28f18"/>
<circle cx="64.4" cy="22.5" r="2.2" fill="#2c2418"/>
<circle cx="64.4" cy="22.5" r="0.7" fill="#8a7a4a"/>
<text x="80.1" y="14.8" font-size="4.6" fill="#3c3c3c" text-anchor="middle" textLength="6.6" lengthAdjust="spacingAndGlyphs">Ref</text>
<path d="M76.89999999999999 10.3 h6.4" stroke="#555" stroke-width="0.45"/>
<circle cx="80.1" cy="22.5" r="5.3" fill="#c9961a"/>
<circle cx="79.89999999999999" cy="22.3" r="4.7" fill="#f3c832"/>
<circle cx="79.6" cy="21.9" r="3.6" fill="#f7e27a"/>
<circle cx="80.1" cy="22.5" r="3.1" fill="#c28f18"/>
<circle cx="80.1" cy="22.5" r="2.2" fill="#2c2418"/>
<circle cx="80.1" cy="22.5" r="0.7" fill="#8a7a4a"/>
<rect x="30.700000000000003" y="28" width="6" height="6.6" fill="#bfc2c2"/>
<path d="M30.700000000000003 30 h6 M30.700000000000003 32 h6" stroke="#85898a" stroke-width="0.7"/>
<rect x="31.1" y="34.4" width="5.2" height="4.8" rx="1.6" fill="#111"/>
<rect x="46.2" y="28" width="6" height="6.6" fill="#bfc2c2"/>
<path d="M46.2 30 h6 M46.2 32 h6" stroke="#85898a" stroke-width="0.7"/>
<rect x="46.6" y="34.4" width="5.2" height="4.8" rx="1.6" fill="#111"/>
<rect x="61.400000000000006" y="28" width="6" height="6.6" fill="#bfc2c2"/>
<path d="M61.400000000000006 30 h6 M61.400000000000006 32 h6" stroke="#85898a" stroke-width="0.7"/>
<rect x="61.800000000000004" y="34.4" width="5.2" height="4.8" rx="1.6" fill="#111"/>
<rect x="86.4" y="19.8" width="6.8" height="6" fill="#c3c6c6"/><path d="M88.6 19.8 v6 M90.8 19.8 v6" stroke="#85898a" stroke-width="0.7"/>
<rect x="93" y="20" width="5" height="5.6" rx="1.7" fill="#111"/>
<path d="M200.8 33.8 V21.4 a8.2 8.2 0 0 1 16.4 0 V33.8 q0 0 -1.6 0 H202.4 q-1.6 0 -1.6 0 Z" fill="#128a32"/>
<rect x="200.8" y="30.4" width="16.4" height="3.6" rx="1.6" fill="#128a32"/>
<rect x="203.6" y="30.799999999999997" width="11" height="1.9" fill="#86d46e"/>
<circle cx="209" cy="22.4" r="7.5" fill="#e9a622"/>
<circle cx="208.4" cy="22.099999999999998" r="6.8" fill="#f4d552"/>
<circle cx="207.9" cy="21.799999999999997" r="6" fill="#f8ec9c"/>
<circle cx="209" cy="22.4" r="5.3" fill="#b89a4a"/>
<circle cx="209" cy="22.4" r="4.8" fill="#7e7e84"/>
<circle cx="209" cy="22.4" r="3.2" fill="#8f8f94" stroke="#6a6a70" stroke-width="0.8"/>
<circle cx="209" cy="22.4" r="1.7" fill="#4a463a"/>
<rect x="193" y="19.5" width="8" height="6.2" fill="#c9cccc"/><path d="M195.4 19.5 v6.2 M197.6 19.5 v6.2" stroke="#85898a" stroke-width="0.7"/>
<rect x="188.2" y="19.799999999999997" width="5.2" height="5.8" rx="1.7" fill="#111"/>
<path d="M200.8 62.3 V49.9 a8.2 8.2 0 0 1 16.4 0 V62.3 q0 0 -1.6 0 H202.4 q-1.6 0 -1.6 0 Z" fill="#128a32"/>
<rect x="200.8" y="58.9" width="16.4" height="3.6" rx="1.6" fill="#128a32"/>
<rect x="203.6" y="59.3" width="11" height="1.9" fill="#86d46e"/>
<circle cx="209" cy="50.9" r="7.5" fill="#e9a622"/>
<circle cx="208.4" cy="50.6" r="6.8" fill="#f4d552"/>
<circle cx="207.9" cy="50.3" r="6" fill="#f8ec9c"/>
<circle cx="209" cy="50.9" r="5.3" fill="#b89a4a"/>
<circle cx="209" cy="50.9" r="4.8" fill="#7e7e84"/>
<circle cx="209" cy="50.9" r="3.2" fill="#8f8f94" stroke="#6a6a70" stroke-width="0.8"/>
<circle cx="209" cy="50.9" r="1.7" fill="#4a463a"/>
<path d="M200.8 90.30000000000001 V77.9 a8.2 8.2 0 0 1 16.4 0 V90.30000000000001 q0 0 -1.6 0 H202.4 q-1.6 0 -1.6 0 Z" fill="#128a32"/>
<rect x="200.8" y="86.9" width="16.4" height="3.6" rx="1.6" fill="#128a32"/>
<rect x="203.6" y="87.30000000000001" width="11" height="1.9" fill="#86d46e"/>
<circle cx="209" cy="78.9" r="7.5" fill="#e9a622"/>
<circle cx="208.4" cy="78.60000000000001" r="6.8" fill="#f4d552"/>
<circle cx="207.9" cy="78.30000000000001" r="6" fill="#f8ec9c"/>
<circle cx="209" cy="78.9" r="5.3" fill="#b89a4a"/>
<circle cx="209" cy="78.9" r="4.8" fill="#7e7e84"/>
<circle cx="209" cy="78.9" r="3.2" fill="#8f8f94" stroke="#6a6a70" stroke-width="0.8"/>
<circle cx="209" cy="78.9" r="1.7" fill="#4a463a"/>
<path d="M200.8 118.80000000000001 V106.4 a8.2 8.2 0 0 1 16.4 0 V118.80000000000001 q0 0 -1.6 0 H202.4 q-1.6 0 -1.6 0 Z" fill="#128a32"/>
<rect x="200.8" y="115.4" width="16.4" height="3.6" rx="1.6" fill="#128a32"/>
<rect x="203.6" y="115.80000000000001" width="11" height="1.9" fill="#86d46e"/>
<circle cx="209" cy="107.4" r="7.5" fill="#e9a622"/>
<circle cx="208.4" cy="107.10000000000001" r="6.8" fill="#f4d552"/>
<circle cx="207.9" cy="106.80000000000001" r="6" fill="#f8ec9c"/>
<circle cx="209" cy="107.4" r="5.3" fill="#b89a4a"/>
<circle cx="209" cy="107.4" r="4.8" fill="#7e7e84"/>
<circle cx="209" cy="107.4" r="3.2" fill="#8f8f94" stroke="#6a6a70" stroke-width="0.8"/>
<circle cx="209" cy="107.4" r="1.7" fill="#4a463a"/>
<rect x="193" y="104.5" width="8" height="6.2" fill="#c9cccc"/><path d="M195.4 104.5 v6.2 M197.6 104.5 v6.2" stroke="#85898a" stroke-width="0.7"/>
<rect x="188.2" y="104.80000000000001" width="5.2" height="5.8" rx="1.7" fill="#111"/>
<rect x="91" y="48.0" width="5" height="5.6" rx="1.7" fill="#111"/>
<rect x="95.8" y="47.699999999999996" width="7.4" height="6.2" fill="#d3d6d6"/><path d="M98.2 47.699999999999996 v6.2 M100.4 47.699999999999996 v6.2" stroke="#8f9394" stroke-width="0.7"/>
<rect x="104.8" y="47.599999999999994" width="9.6" height="6.6" fill="#e9c235"/>
<rect x="104.8" y="47.599999999999994" width="2" height="6.6" fill="#f6e07c"/>
<path d="M108 47.599999999999994 v6.6 M110.4 47.599999999999994 v6.6" stroke="#a37c16" stroke-width="0.8"/>
<rect x="112" y="47.199999999999996" width="2.4" height="7.4" fill="#d9a926"/>
<rect x="91" y="76.0" width="5" height="5.6" rx="1.7" fill="#111"/>
<rect x="95.8" y="75.7" width="7.4" height="6.2" fill="#d3d6d6"/><path d="M98.2 75.7 v6.2 M100.4 75.7 v6.2" stroke="#8f9394" stroke-width="0.7"/>
<rect x="104.8" y="75.6" width="9.6" height="6.6" fill="#e9c235"/>
<rect x="104.8" y="75.6" width="2" height="6.6" fill="#f6e07c"/>
<path d="M108 75.6 v6.6 M110.4 75.6 v6.6" stroke="#a37c16" stroke-width="0.8"/>
<rect x="112" y="75.2" width="2.4" height="7.4" fill="#d9a926"/>
<path d="M225.70000000000002 9.0 L222.00000000000003 5.299999999999999" stroke="#0b2236" stroke-width="1.4" opacity="0.75"/>
<path d="M220.60000000000002 3.8999999999999995 L226.00000000000003 3.8999999999999995 L220.60000000000002 9.3 Z" fill="#0b2236"/>
<path d="M228.9 9.0 L232.6 5.299999999999999" stroke="#0b2236" stroke-width="1.4" opacity="0.75"/>
<path d="M234.0 3.8999999999999995 L228.6 3.8999999999999995 L234.0 9.3 Z" fill="#0b2236"/>
<path d="M225.70000000000002 12.2 L222.00000000000003 15.9" stroke="#0b2236" stroke-width="1.4" opacity="0.75"/>
<path d="M220.60000000000002 17.3 L226.00000000000003 17.3 L220.60000000000002 11.9 Z" fill="#0b2236"/>
<path d="M228.9 12.2 L232.6 15.9" stroke="#0b2236" stroke-width="1.4" opacity="0.75"/>
<path d="M234.0 17.3 L228.6 17.3 L234.0 11.9 Z" fill="#0b2236"/>
</g>
<g transform="translate(628,254)">
<rect x="0" y="0" width="238" height="124.4" fill="#70767a"/>
<path d="M97 22.8 H190" stroke="#232323" stroke-width="3" fill="none"/>
<path d="M33.7 38 V107.4 H190" stroke="#232323" stroke-width="3" fill="none" stroke-linejoin="round"/>
<path d="M64.4 38 V50.8 H92" stroke="#0b50e6" stroke-width="3.1" fill="none" stroke-linejoin="round"/>
<path d="M49.2 38 V78.8 H92" stroke="#0b50e6" stroke-width="3.1" fill="none" stroke-linejoin="round"/>
<rect x="22.6" y="7" width="69" height="24.4" fill="#5c6164" opacity="0.55"/>
<rect x="22.2" y="6" width="68.8" height="24.2" fill="#dedbd7"/>
<rect x="22.2" y="27.6" width="68.8" height="2.6" fill="#c9c6c1"/>
<text x="33.5" y="14.8" font-size="4.6" fill="#3c3c3c" text-anchor="middle" textLength="6.6" lengthAdjust="spacingAndGlyphs">Ref</text>
<circle cx="33.5" cy="22.5" r="5.3" fill="#c9961a"/>
<circle cx="33.3" cy="22.3" r="4.7" fill="#f3c832"/>
<circle cx="33.0" cy="21.9" r="3.6" fill="#f7e27a"/>
<circle cx="33.5" cy="22.5" r="3.1" fill="#c28f18"/>
<circle cx="33.5" cy="22.5" r="2.2" fill="#2c2418"/>
<circle cx="33.5" cy="22.5" r="0.7" fill="#8a7a4a"/>
<text x="49.1" y="14.8" font-size="4.6" fill="#3c3c3c" text-anchor="middle" textLength="6.6" lengthAdjust="spacingAndGlyphs">Out</text>
<circle cx="49.1" cy="22.5" r="5.3" fill="#c9961a"/>
<circle cx="48.9" cy="22.3" r="4.7" fill="#f3c832"/>
<circle cx="48.6" cy="21.9" r="3.6" fill="#f7e27a"/>
<circle cx="49.1" cy="22.5" r="3.1" fill="#c28f18"/>
<circle cx="49.1" cy="22.5" r="2.2" fill="#2c2418"/>
<circle cx="49.1" cy="22.5" r="0.7" fill="#8a7a4a"/>
<text x="64.4" y="14.8" font-size="4.6" fill="#3c3c3c" text-anchor="middle" textLength="6.6" lengthAdjust="spacingAndGlyphs">Out</text>
<path d="M61.2 10.3 h6.4" stroke="#555" stroke-width="0.45"/>
<circle cx="64.4" cy="22.5" r="5.3" fill="#c9961a"/>
<circle cx="64.2" cy="22.3" r="4.7" fill="#f3c832"/>
<circle cx="63.900000000000006" cy="21.9" r="3.6" fill="#f7e27a"/>
<circle cx="64.4" cy="22.5" r="3.1" fill="#c28f18"/>
<circle cx="64.4" cy="22.5" r="2.2" fill="#2c2418"/>
<circle cx="64.4" cy="22.5" r="0.7" fill="#8a7a4a"/>
<text x="80.1" y="14.8" font-size="4.6" fill="#3c3c3c" text-anchor="middle" textLength="6.6" lengthAdjust="spacingAndGlyphs">Ref</text>
<path d="M76.89999999999999 10.3 h6.4" stroke="#555" stroke-width="0.45"/>
<circle cx="80.1" cy="22.5" r="5.3" fill="#c9961a"/>
<circle cx="79.89999999999999" cy="22.3" r="4.7" fill="#f3c832"/>
<circle cx="79.6" cy="21.9" r="3.6" fill="#f7e27a"/>
<circle cx="80.1" cy="22.5" r="3.1" fill="#c28f18"/>
<circle cx="80.1" cy="22.5" r="2.2" fill="#2c2418"/>
<circle cx="80.1" cy="22.5" r="0.7" fill="#8a7a4a"/>
<rect x="30.700000000000003" y="28" width="6" height="6.6" fill="#bfc2c2"/>
<path d="M30.700000000000003 30 h6 M30.700000000000003 32 h6" stroke="#85898a" stroke-width="0.7"/>
<rect x="31.1" y="34.4" width="5.2" height="4.8" rx="1.6" fill="#111"/>
<rect x="46.2" y="28" width="6" height="6.6" fill="#bfc2c2"/>
<path d="M46.2 30 h6 M46.2 32 h6" stroke="#85898a" stroke-width="0.7"/>
<rect x="46.6" y="34.4" width="5.2" height="4.8" rx="1.6" fill="#111"/>
<rect x="61.400000000000006" y="28" width="6" height="6.6" fill="#bfc2c2"/>
<path d="M61.400000000000006 30 h6 M61.400000000000006 32 h6" stroke="#85898a" stroke-width="0.7"/>
<rect x="61.800000000000004" y="34.4" width="5.2" height="4.8" rx="1.6" fill="#111"/>
<rect x="86.4" y="19.8" width="6.8" height="6" fill="#c3c6c6"/><path d="M88.6 19.8 v6 M90.8 19.8 v6" stroke="#85898a" stroke-width="0.7"/>
<rect x="93" y="20" width="5" height="5.6" rx="1.7" fill="#111"/>
<path d="M200.8 33.8 V21.4 a8.2 8.2 0 0 1 16.4 0 V33.8 q0 0 -1.6 0 H202.4 q-1.6 0 -1.6 0 Z" fill="#128a32"/>
<rect x="200.8" y="30.4" width="16.4" height="3.6" rx="1.6" fill="#128a32"/>
<rect x="203.6" y="30.799999999999997" width="11" height="1.9" fill="#86d46e"/>
<circle cx="209" cy="22.4" r="7.5" fill="#e9a622"/>
<circle cx="208.4" cy="22.099999999999998" r="6.8" fill="#f4d552"/>
<circle cx="207.9" cy="21.799999999999997" r="6" fill="#f8ec9c"/>
<circle cx="209" cy="22.4" r="5.3" fill="#b89a4a"/>
<circle cx="209" cy="22.4" r="4.8" fill="#7e7e84"/>
<circle cx="209" cy="22.4" r="3.2" fill="#8f8f94" stroke="#6a6a70" stroke-width="0.8"/>
<circle cx="209" cy="22.4" r="1.7" fill="#4a463a"/>
<rect x="193" y="19.5" width="8" height="6.2" fill="#c9cccc"/><path d="M195.4 19.5 v6.2 M197.6 19.5 v6.2" stroke="#85898a" stroke-width="0.7"/>
<rect x="188.2" y="19.799999999999997" width="5.2" height="5.8" rx="1.7" fill="#111"/>
<path d="M200.8 62.3 V49.9 a8.2 8.2 0 0 1 16.4 0 V62.3 q0 0 -1.6 0 H202.4 q-1.6 0 -1.6 0 Z" fill="#128a32"/>
<rect x="200.8" y="58.9" width="16.4" height="3.6" rx="1.6" fill="#128a32"/>
<rect x="203.6" y="59.3" width="11" height="1.9" fill="#86d46e"/>
<circle cx="209" cy="50.9" r="7.5" fill="#e9a622"/>
<circle cx="208.4" cy="50.6" r="6.8" fill="#f4d552"/>
<circle cx="207.9" cy="50.3" r="6" fill="#f8ec9c"/>
<circle cx="209" cy="50.9" r="5.3" fill="#b89a4a"/>
<circle cx="209" cy="50.9" r="4.8" fill="#7e7e84"/>
<circle cx="209" cy="50.9" r="3.2" fill="#8f8f94" stroke="#6a6a70" stroke-width="0.8"/>
<circle cx="209" cy="50.9" r="1.7" fill="#4a463a"/>
<path d="M200.8 90.30000000000001 V77.9 a8.2 8.2 0 0 1 16.4 0 V90.30000000000001 q0 0 -1.6 0 H202.4 q-1.6 0 -1.6 0 Z" fill="#128a32"/>
<rect x="200.8" y="86.9" width="16.4" height="3.6" rx="1.6" fill="#128a32"/>
<rect x="203.6" y="87.30000000000001" width="11" height="1.9" fill="#86d46e"/>
<circle cx="209" cy="78.9" r="7.5" fill="#e9a622"/>
<circle cx="208.4" cy="78.60000000000001" r="6.8" fill="#f4d552"/>
<circle cx="207.9" cy="78.30000000000001" r="6" fill="#f8ec9c"/>
<circle cx="209" cy="78.9" r="5.3" fill="#b89a4a"/>
<circle cx="209" cy="78.9" r="4.8" fill="#7e7e84"/>
<circle cx="209" cy="78.9" r="3.2" fill="#8f8f94" stroke="#6a6a70" stroke-width="0.8"/>
<circle cx="209" cy="78.9" r="1.7" fill="#4a463a"/>
<path d="M200.8 118.80000000000001 V106.4 a8.2 8.2 0 0 1 16.4 0 V118.80000000000001 q0 0 -1.6 0 H202.4 q-1.6 0 -1.6 0 Z" fill="#128a32"/>
<rect x="200.8" y="115.4" width="16.4" height="3.6" rx="1.6" fill="#128a32"/>
<rect x="203.6" y="115.80000000000001" width="11" height="1.9" fill="#86d46e"/>
<circle cx="209" cy="107.4" r="7.5" fill="#e9a622"/>
<circle cx="208.4" cy="107.10000000000001" r="6.8" fill="#f4d552"/>
<circle cx="207.9" cy="106.80000000000001" r="6" fill="#f8ec9c"/>
<circle cx="209" cy="107.4" r="5.3" fill="#b89a4a"/>
<circle cx="209" cy="107.4" r="4.8" fill="#7e7e84"/>
<circle cx="209" cy="107.4" r="3.2" fill="#8f8f94" stroke="#6a6a70" stroke-width="0.8"/>
<circle cx="209" cy="107.4" r="1.7" fill="#4a463a"/>
<rect x="193" y="104.5" width="8" height="6.2" fill="#c9cccc"/><path d="M195.4 104.5 v6.2 M197.6 104.5 v6.2" stroke="#85898a" stroke-width="0.7"/>
<rect x="188.2" y="104.80000000000001" width="5.2" height="5.8" rx="1.7" fill="#111"/>
<rect x="91" y="48.0" width="5" height="5.6" rx="1.7" fill="#111"/>
<rect x="95.8" y="47.699999999999996" width="7.4" height="6.2" fill="#d3d6d6"/><path d="M98.2 47.699999999999996 v6.2 M100.4 47.699999999999996 v6.2" stroke="#8f9394" stroke-width="0.7"/>
<rect x="91" y="76.0" width="5" height="5.6" rx="1.7" fill="#111"/>
<rect x="95.8" y="75.7" width="7.4" height="6.2" fill="#d3d6d6"/><path d="M98.2 75.7 v6.2 M100.4 75.7 v6.2" stroke="#8f9394" stroke-width="0.7"/>
<path d="M225.70000000000002 9.0 L222.00000000000003 5.299999999999999" stroke="#0b2236" stroke-width="1.4" opacity="0.75"/>
<path d="M220.60000000000002 3.8999999999999995 L226.00000000000003 3.8999999999999995 L220.60000000000002 9.3 Z" fill="#0b2236"/>
<path d="M228.9 9.0 L232.6 5.299999999999999" stroke="#0b2236" stroke-width="1.4" opacity="0.75"/>
<path d="M234.0 3.8999999999999995 L228.6 3.8999999999999995 L234.0 9.3 Z" fill="#0b2236"/>
<path d="M225.70000000000002 12.2 L222.00000000000003 15.9" stroke="#0b2236" stroke-width="1.4" opacity="0.75"/>
<path d="M220.60000000000002 17.3 L226.00000000000003 17.3 L220.60000000000002 11.9 Z" fill="#0b2236"/>
<path d="M228.9 12.2 L232.6 15.9" stroke="#0b2236" stroke-width="1.4" opacity="0.75"/>
<path d="M234.0 17.3 L228.6 17.3 L234.0 11.9 Z" fill="#0b2236"/>
</g>
<g transform="translate(309,523.6)">
<rect x="0" y="0" width="238" height="124.4" fill="#70767a"/>
<path d="M97 22.8 H190" stroke="#232323" stroke-width="3" fill="none"/>
<path d="M33.7 38 V107.4 H190" stroke="#232323" stroke-width="3" fill="none" stroke-linejoin="round"/>
<path d="M64.4 38 V50.8 H92" stroke="#0b50e6" stroke-width="3.1" fill="none" stroke-linejoin="round"/>
<path d="M49.2 38 V78.8 H92" stroke="#0b50e6" stroke-width="3.1" fill="none" stroke-linejoin="round"/>
<rect x="22.6" y="7" width="69" height="24.4" fill="#5c6164" opacity="0.55"/>
<rect x="22.2" y="6" width="68.8" height="24.2" fill="#dedbd7"/>
<rect x="22.2" y="27.6" width="68.8" height="2.6" fill="#c9c6c1"/>
<text x="33.5" y="14.8" font-size="4.6" fill="#3c3c3c" text-anchor="middle" textLength="6.6" lengthAdjust="spacingAndGlyphs">Ref</text>
<circle cx="33.5" cy="22.5" r="5.3" fill="#c9961a"/>
<circle cx="33.3" cy="22.3" r="4.7" fill="#f3c832"/>
<circle cx="33.0" cy="21.9" r="3.6" fill="#f7e27a"/>
<circle cx="33.5" cy="22.5" r="3.1" fill="#c28f18"/>
<circle cx="33.5" cy="22.5" r="2.2" fill="#2c2418"/>
<circle cx="33.5" cy="22.5" r="0.7" fill="#8a7a4a"/>
<text x="49.1" y="14.8" font-size="4.6" fill="#3c3c3c" text-anchor="middle" textLength="6.6" lengthAdjust="spacingAndGlyphs">Out</text>
<circle cx="49.1" cy="22.5" r="5.3" fill="#c9961a"/>
<circle cx="48.9" cy="22.3" r="4.7" fill="#f3c832"/>
<circle cx="48.6" cy="21.9" r="3.6" fill="#f7e27a"/>
<circle cx="49.1" cy="22.5" r="3.1" fill="#c28f18"/>
<circle cx="49.1" cy="22.5" r="2.2" fill="#2c2418"/>
<circle cx="49.1" cy="22.5" r="0.7" fill="#8a7a4a"/>
<text x="64.4" y="14.8" font-size="4.6" fill="#3c3c3c" text-anchor="middle" textLength="6.6" lengthAdjust="spacingAndGlyphs">Out</text>
<path d="M61.2 10.3 h6.4" stroke="#555" stroke-width="0.45"/>
<circle cx="64.4" cy="22.5" r="5.3" fill="#c9961a"/>
<circle cx="64.2" cy="22.3" r="4.7" fill="#f3c832"/>
<circle cx="63.900000000000006" cy="21.9" r="3.6" fill="#f7e27a"/>
<circle cx="64.4" cy="22.5" r="3.1" fill="#c28f18"/>
<circle cx="64.4" cy="22.5" r="2.2" fill="#2c2418"/>
<circle cx="64.4" cy="22.5" r="0.7" fill="#8a7a4a"/>
<text x="80.1" y="14.8" font-size="4.6" fill="#3c3c3c" text-anchor="middle" textLength="6.6" lengthAdjust="spacingAndGlyphs">Ref</text>
<path d="M76.89999999999999 10.3 h6.4" stroke="#555" stroke-width="0.45"/>
<circle cx="80.1" cy="22.5" r="5.3" fill="#c9961a"/>
<circle cx="79.89999999999999" cy="22.3" r="4.7" fill="#f3c832"/>
<circle cx="79.6" cy="21.9" r="3.6" fill="#f7e27a"/>
<circle cx="80.1" cy="22.5" r="3.1" fill="#c28f18"/>
<circle cx="80.1" cy="22.5" r="2.2" fill="#2c2418"/>
<circle cx="80.1" cy="22.5" r="0.7" fill="#8a7a4a"/>
<rect x="30.700000000000003" y="28" width="6" height="6.6" fill="#bfc2c2"/>
<path d="M30.700000000000003 30 h6 M30.700000000000003 32 h6" stroke="#85898a" stroke-width="0.7"/>
<rect x="31.1" y="34.4" width="5.2" height="4.8" rx="1.6" fill="#111"/>
<rect x="46.2" y="28" width="6" height="6.6" fill="#bfc2c2"/>
<path d="M46.2 30 h6 M46.2 32 h6" stroke="#85898a" stroke-width="0.7"/>
<rect x="46.6" y="34.4" width="5.2" height="4.8" rx="1.6" fill="#111"/>
<rect x="61.400000000000006" y="28" width="6" height="6.6" fill="#bfc2c2"/>
<path d="M61.400000000000006 30 h6 M61.400000000000006 32 h6" stroke="#85898a" stroke-width="0.7"/>
<rect x="61.800000000000004" y="34.4" width="5.2" height="4.8" rx="1.6" fill="#111"/>
<rect x="86.4" y="19.8" width="6.8" height="6" fill="#c3c6c6"/><path d="M88.6 19.8 v6 M90.8 19.8 v6" stroke="#85898a" stroke-width="0.7"/>
<rect x="93" y="20" width="5" height="5.6" rx="1.7" fill="#111"/>
<path d="M200.8 33.8 V21.4 a8.2 8.2 0 0 1 16.4 0 V33.8 q0 0 -1.6 0 H202.4 q-1.6 0 -1.6 0 Z" fill="#128a32"/>
<rect x="200.8" y="30.4" width="16.4" height="3.6" rx="1.6" fill="#128a32"/>
<rect x="203.6" y="30.799999999999997" width="11" height="1.9" fill="#86d46e"/>
<circle cx="209" cy="22.4" r="7.5" fill="#e9a622"/>
<circle cx="208.4" cy="22.099999999999998" r="6.8" fill="#f4d552"/>
<circle cx="207.9" cy="21.799999999999997" r="6" fill="#f8ec9c"/>
<circle cx="209" cy="22.4" r="5.3" fill="#b89a4a"/>
<circle cx="209" cy="22.4" r="4.8" fill="#7e7e84"/>
<circle cx="209" cy="22.4" r="3.2" fill="#8f8f94" stroke="#6a6a70" stroke-width="0.8"/>
<circle cx="209" cy="22.4" r="1.7" fill="#4a463a"/>
<rect x="193" y="19.5" width="8" height="6.2" fill="#c9cccc"/><path d="M195.4 19.5 v6.2 M197.6 19.5 v6.2" stroke="#85898a" stroke-width="0.7"/>
<rect x="188.2" y="19.799999999999997" width="5.2" height="5.8" rx="1.7" fill="#111"/>
<path d="M200.8 62.3 V49.9 a8.2 8.2 0 0 1 16.4 0 V62.3 q0 0 -1.6 0 H202.4 q-1.6 0 -1.6 0 Z" fill="#128a32"/>
<rect x="200.8" y="58.9" width="16.4" height="3.6" rx="1.6" fill="#128a32"/>
<rect x="203.6" y="59.3" width="11" height="1.9" fill="#86d46e"/>
<circle cx="209" cy="50.9" r="7.5" fill="#e9a622"/>
<circle cx="208.4" cy="50.6" r="6.8" fill="#f4d552"/>
<circle cx="207.9" cy="50.3" r="6" fill="#f8ec9c"/>
<circle cx="209" cy="50.9" r="5.3" fill="#b89a4a"/>
<circle cx="209" cy="50.9" r="4.8" fill="#7e7e84"/>
<circle cx="209" cy="50.9" r="3.2" fill="#8f8f94" stroke="#6a6a70" stroke-width="0.8"/>
<circle cx="209" cy="50.9" r="1.7" fill="#4a463a"/>
<path d="M200.8 90.30000000000001 V77.9 a8.2 8.2 0 0 1 16.4 0 V90.30000000000001 q0 0 -1.6 0 H202.4 q-1.6 0 -1.6 0 Z" fill="#128a32"/>
<rect x="200.8" y="86.9" width="16.4" height="3.6" rx="1.6" fill="#128a32"/>
<rect x="203.6" y="87.30000000000001" width="11" height="1.9" fill="#86d46e"/>
<circle cx="209" cy="78.9" r="7.5" fill="#e9a622"/>
<circle cx="208.4" cy="78.60000000000001" r="6.8" fill="#f4d552"/>
<circle cx="207.9" cy="78.30000000000001" r="6" fill="#f8ec9c"/>
<circle cx="209" cy="78.9" r="5.3" fill="#b89a4a"/>
<circle cx="209" cy="78.9" r="4.8" fill="#7e7e84"/>
<circle cx="209" cy="78.9" r="3.2" fill="#8f8f94" stroke="#6a6a70" stroke-width="0.8"/>
<circle cx="209" cy="78.9" r="1.7" fill="#4a463a"/>
<path d="M200.8 118.80000000000001 V106.4 a8.2 8.2 0 0 1 16.4 0 V118.80000000000001 q0 0 -1.6 0 H202.4 q-1.6 0 -1.6 0 Z" fill="#128a32"/>
<rect x="200.8" y="115.4" width="16.4" height="3.6" rx="1.6" fill="#128a32"/>
<rect x="203.6" y="115.80000000000001" width="11" height="1.9" fill="#86d46e"/>
<circle cx="209" cy="107.4" r="7.5" fill="#e9a622"/>
<circle cx="208.4" cy="107.10000000000001" r="6.8" fill="#f4d552"/>
<circle cx="207.9" cy="106.80000000000001" r="6" fill="#f8ec9c"/>
<circle cx="209" cy="107.4" r="5.3" fill="#b89a4a"/>
<circle cx="209" cy="107.4" r="4.8" fill="#7e7e84"/>
<circle cx="209" cy="107.4" r="3.2" fill="#8f8f94" stroke="#6a6a70" stroke-width="0.8"/>
<circle cx="209" cy="107.4" r="1.7" fill="#4a463a"/>
<rect x="193" y="104.5" width="8" height="6.2" fill="#c9cccc"/><path d="M195.4 104.5 v6.2 M197.6 104.5 v6.2" stroke="#85898a" stroke-width="0.7"/>
<rect x="188.2" y="104.80000000000001" width="5.2" height="5.8" rx="1.7" fill="#111"/>
<rect x="91" y="48.0" width="5" height="5.6" rx="1.7" fill="#111"/>
<rect x="95.8" y="47.699999999999996" width="7.4" height="6.2" fill="#d3d6d6"/><path d="M98.2 47.699999999999996 v6.2 M100.4 47.699999999999996 v6.2" stroke="#8f9394" stroke-width="0.7"/>
<rect x="108.6" y="47.699999999999996" width="12.8" height="6.4" fill="#e9c235"/>
<rect x="108.6" y="47.699999999999996" width="2.4" height="6.4" fill="#f6e07c"/>
<path d="M112.6 47.699999999999996 v6.4 M115 47.699999999999996 v6.4" stroke="#a37c16" stroke-width="0.8"/>
<rect x="117.6" y="47.199999999999996" width="3.8" height="7.4" fill="#d9a926"/>
<rect x="125.6" y="47.4" width="8.4" height="7" rx="1.4" fill="#e9c235"/>
<path d="M128.4 47.4 v7 M130.8 47.4 v7" stroke="#a37c16" stroke-width="0.9"/>
<rect x="91" y="76.0" width="5" height="5.6" rx="1.7" fill="#111"/>
<rect x="95.8" y="75.7" width="7.4" height="6.2" fill="#d3d6d6"/><path d="M98.2 75.7 v6.2 M100.4 75.7 v6.2" stroke="#8f9394" stroke-width="0.7"/>
<rect x="108.6" y="75.7" width="12.8" height="6.4" fill="#e9c235"/>
<rect x="108.6" y="75.7" width="2.4" height="6.4" fill="#f6e07c"/>
<path d="M112.6 75.7 v6.4 M115 75.7 v6.4" stroke="#a37c16" stroke-width="0.8"/>
<rect x="117.6" y="75.2" width="3.8" height="7.4" fill="#d9a926"/>
<rect x="125.6" y="75.39999999999999" width="8.4" height="7" rx="1.4" fill="#e9c235"/>
<path d="M128.4 75.39999999999999 v7 M130.8 75.39999999999999 v7" stroke="#a37c16" stroke-width="0.9"/>
<path d="M225.70000000000002 9.0 L222.00000000000003 5.299999999999999" stroke="#0b2236" stroke-width="1.4" opacity="0.75"/>
<path d="M220.60000000000002 3.8999999999999995 L226.00000000000003 3.8999999999999995 L220.60000000000002 9.3 Z" fill="#0b2236"/>
<path d="M228.9 9.0 L232.6 5.299999999999999" stroke="#0b2236" stroke-width="1.4" opacity="0.75"/>
<path d="M234.0 3.8999999999999995 L228.6 3.8999999999999995 L234.0 9.3 Z" fill="#0b2236"/>
<path d="M225.70000000000002 12.2 L222.00000000000003 15.9" stroke="#0b2236" stroke-width="1.4" opacity="0.75"/>
<path d="M220.60000000000002 17.3 L226.00000000000003 17.3 L220.60000000000002 11.9 Z" fill="#0b2236"/>
<path d="M228.9 12.2 L232.6 15.9" stroke="#0b2236" stroke-width="1.4" opacity="0.75"/>
<path d="M234.0 17.3 L228.6 17.3 L234.0 11.9 Z" fill="#0b2236"/>
</g>
<text x="337.6" y="402.6" font-size="13.2" fill="#f4f4f4" font-weight="bold" textLength="139" lengthAdjust="spacingAndGlyphs">R&amp;S Accessory short</text>
<rect x="508.4" y="382.9" width="30.8" height="30.2" rx="5.6" fill="#454545" stroke="#cdcdcd" stroke-width="1.8"/>
<g transform="translate(521.7,399.4) rotate(45)"><path d="M-4.3 -13.6 H4.3 V5.4 L0 13.8 L-4.3 5.4 Z" fill="#fff"/><path d="M-1.5 -10.4 V3.8" stroke="#454545" stroke-width="1.2"/><path d="M-3.2 5.6 h3.6 l-1.7 3.4 Z" fill="#454545"/></g>
<rect x="337.6" y="417.7" width="144.8" height="31.2" rx="6.2" fill="url(#gCal)" stroke="#e2e8f6" stroke-width="1.4"/><text x="410.0" y="442.09999999999997" font-size="19.5" fill="#000" text-anchor="middle" textLength="84.6" lengthAdjust="spacingAndGlyphs">Calibrate</text>
<circle cx="502.5" cy="433.3" r="14.2" fill="#23a023"/><path d="M494.1 433.1 L500.2 439.5 L510.3 426.7" stroke="#fff" stroke-width="3.5" fill="none" stroke-linejoin="miter"/>
<rect x="656.8" y="382.3" width="144.8" height="31.2" rx="6.2" fill="url(#gCal)" stroke="#e2e8f6" stroke-width="1.4"/><text x="729.1999999999999" y="406.7" font-size="19.5" fill="#000" text-anchor="middle" textLength="84.6" lengthAdjust="spacingAndGlyphs">Calibrate</text>
<circle cx="821.4" cy="397.9" r="14.2" fill="#23a023"/><path d="M813.0 397.7 L819.1 404.09999999999997 L829.1999999999999 391.29999999999995" stroke="#fff" stroke-width="3.5" fill="none" stroke-linejoin="miter"/>
<rect x="337.6" y="651.9" width="144.8" height="31.2" rx="6.2" fill="url(#gCal)" stroke="#e2e8f6" stroke-width="1.4"/><text x="410.0" y="676.3" font-size="19.5" fill="#000" text-anchor="middle" textLength="84.6" lengthAdjust="spacingAndGlyphs">Calibrate</text>
<circle cx="502.5" cy="667.4" r="14.2" fill="#23a023"/><path d="M494.1 667.1999999999999 L500.2 673.6 L510.3 660.8" stroke="#fff" stroke-width="3.5" fill="none" stroke-linejoin="miter"/>
<rect x="267.2" y="701.5" width="130.2" height="37.8" rx="6.5" fill="#4a4a4a" stroke="#bcc1c6" stroke-width="1.8"/>
<path d="M272.8 719.9 L279.9 715.4 V724.4 Z" fill="#fff"/><rect x="285" y="710.4" width="1.8" height="19.8" fill="#f0f0f0"/>
<text x="322.2" y="727.6" font-size="20" fill="#fff" textLength="45" lengthAdjust="spacingAndGlyphs">Back</text>
<rect x="784.8" y="701.5" width="130.2" height="37.8" rx="6.5" fill="#4a4a4a" stroke="#bcc1c6" stroke-width="1.8"/>
<path d="M908.3 719.9 L901.2 715.4 V724.4 Z" fill="#fff"/><rect x="893.7" y="710.4" width="1.8" height="19.8" fill="#f0f0f0"/>
<text x="817" y="727.6" font-size="20" fill="#fff" textLength="43.6" lengthAdjust="spacingAndGlyphs">Next</text>
<clipPath id="cpImg"><rect x="309" y="254" width="238" height="124.4"/><rect x="628" y="254" width="238" height="124.4"/><rect x="309" y="523.6" width="238" height="124.4"/></clipPath>
<g clip-path="url(#cpImg)" opacity="0.1"><path d="M287.2 53.2 V763.9 M388.3 53.2 V763.9 M489.4 53.2 V763.9 M590.6 53.2 V763.9 M691.7 53.2 V763.9 M792.8 53.2 V763.9 M893.9 53.2 V763.9 M995.1 53.2 V763.9" stroke="#fff" stroke-width="1" stroke-dasharray="3 3" stroke-dashoffset="5.5" fill="none"/><path d="M84.9 124.3 H1096.2 M84.9 195.3 H1096.2 M84.9 337.5 H1096.2 M84.9 408.5 H1096.2 M84.9 479.6 H1096.2 M84.9 550.7 H1096.2 M84.9 621.8 H1096.2 M84.9 692.8 H1096.2" stroke="#fff" stroke-width="1" stroke-dasharray="3 3" stroke-dashoffset="2.1" fill="none"/><path d="M84.9 266.4 H1096.2" stroke="#fff" stroke-width="1.1" fill="none"/></g>
<rect x="404.2" y="63" width="14.8" height="14.4" rx="2" fill="#e03030" opacity="0.42"/>
<path d="M407.8 66.4 l7.6 7.6 M415.4 66.4 l-7.6 7.6" stroke="#fff" stroke-width="2.2" opacity="0.4"/>
<path d="M242.6 553.3 H280.4 L284.8 559.3 L350 558.2 L540 557.1 L800 556.6 L937.8 556.3" stroke="#f0a8a8" stroke-width="1" fill="none" opacity="0.3"/><rect x="72" y="0" width="1296" height="49.5" fill="url(#gTop)"/>
<rect x="80" y="6.4" width="35.8" height="36" rx="7" fill="#0d9594" stroke="#dfe6ea" stroke-opacity="0.85" stroke-width="1.5"/>
<rect x="123.5" y="6.4" width="35.8" height="36" rx="7" fill="#9b9b9b" stroke="#dfe6ea" stroke-opacity="0.85" stroke-width="1.5"/>
<rect x="167" y="6.4" width="35.8" height="36" rx="7" fill="#f98a0e" stroke="#dfe6ea" stroke-opacity="0.85" stroke-width="1.5"/>
<rect x="217.5" y="6.4" width="35.8" height="36" rx="7" fill="#3a4a57" stroke="#aab6c0" stroke-opacity="0.95" stroke-width="1.5"/>
<rect x="261" y="6.4" width="35.8" height="36" rx="7" fill="#5f9a0a" stroke="#dfe6ea" stroke-opacity="0.85" stroke-width="1.5"/>
<rect x="311.5" y="6.4" width="35.8" height="36" rx="7" fill="#5f9a0a" stroke="#dfe6ea" stroke-opacity="0.85" stroke-width="1.5"/>
<rect x="355" y="6.4" width="35.8" height="36" rx="7" fill="#5f9a0a" stroke="#dfe6ea" stroke-opacity="0.85" stroke-width="1.5"/>
<rect x="398.5" y="6.4" width="35.8" height="36" rx="7" fill="#495df1" stroke="#dfe6ea" stroke-opacity="0.85" stroke-width="1.5"/>
<rect x="442" y="6.4" width="35.8" height="36" rx="7" fill="#495df1" stroke="#dfe6ea" stroke-opacity="0.85" stroke-width="1.5"/>
<rect x="485.5" y="6.4" width="35.8" height="36" rx="7" fill="#495df1" stroke="#dfe6ea" stroke-opacity="0.85" stroke-width="1.5"/>
<rect x="529" y="6.4" width="35.8" height="36" rx="7" fill="#495df1" stroke="#dfe6ea" stroke-opacity="0.85" stroke-width="1.5"/>
<rect x="572.5" y="6.4" width="35.8" height="36" rx="7" fill="#495df1" stroke="#dfe6ea" stroke-opacity="0.85" stroke-width="1.5"/>
<rect x="616" y="6.4" width="35.8" height="36" rx="7" fill="#495df1" stroke="#dfe6ea" stroke-opacity="0.85" stroke-width="1.5"/>
<rect x="659.5" y="6.4" width="35.8" height="36" rx="7" fill="#495df1" stroke="#dfe6ea" stroke-opacity="0.85" stroke-width="1.5"/>
<rect x="703" y="6.4" width="35.8" height="36" rx="7" fill="#232b33" stroke="#aab6c0" stroke-opacity="0.95" stroke-width="1.5"/>
<rect x="209.79999999999998" y="10" width="1.8" height="29.6" fill="#8595a0"/>
<rect x="304.1" y="10" width="1.8" height="29.6" fill="#8595a0"/>
<path d="M87.4 23.9 L96.3 16 L96.3 20.4 C103.4 20.4 107.4 24.4 108 30.8 C105.4 27.6 101.8 27 96.3 27.4 L96.3 31.8 Z" fill="#fff"/>
<path d="M151 23.9 L142.1 16 L142.1 20.4 C135 20.4 131 24.4 130.4 30.8 C133 27.6 136.6 27 142.1 27.4 L142.1 31.8 Z" fill="#f2f2f2"/>
<circle cx="184.6" cy="24.3" r="13.3" fill="#fff"/>
<text x="184.6" y="32" font-size="22.5" fill="#f98a0e" font-weight="bold" text-anchor="middle">?</text>
<path d="M222.3 31 V17.5 H233.4 L235.2 15.4 H242.4 L243.6 17.8 V19" fill="none" stroke="#fff" stroke-width="1.4" stroke-linejoin="round"/>
<path d="M221.8 32.7 L225.3 20.9 H236.6 L238.2 18.3 H248.3 L244 32.7 Z" fill="#fff"/>
<path d="M265.6 36.2 L267.6 29.2 L269.6 36.2 L272.8 12.8 L276 20.2 L278.3 13.4 L280.4 19.2 L282.4 13.8 L284.3 18.6 L286.3 14.4" fill="none" stroke="#f4dc00" stroke-width="1.8" stroke-linejoin="round"/>
<path d="M265.2 24.7 H269 M273.6 24.7 H285" stroke="#fff" stroke-width="1.5" fill="none"/>
<path d="M285.6 24.7 L291.2 21.3 Q292.2 21.3 292.2 22.3 V27.1 Q292.2 28.1 291.2 28.1 Z" fill="#fff"/>
<circle cx="326.2" cy="21.2" r="7.9" fill="none" stroke="#fff" stroke-width="2.3"/>
<path d="M322.2 21.2 h8 M326.2 17.2 v8" stroke="#fff" stroke-width="1.7"/>
<path d="M332 27 L340.5 35.5" stroke="#fff" stroke-width="3.4"/>
<path d="M344 39 H337.2 L344 32.2 Z" fill="#fff"/>
<rect x="364.4" y="12.2" width="5.5" height="2.8" fill="#fff"/><rect x="375.8" y="12.2" width="5.4" height="2.8" fill="#fff"/>
<path d="M363.7 16.3 H370.3 V18.8 H375.1 V16.3 H381.7 L383.9 32.7 H376.6 V27.4 Q376.6 23.6 372.6 23.6 Q368.5 23.6 368.5 27.4 V32.7 H361.5 Z" fill="#fff"/>
<rect x="361.5" y="33.7" width="7" height="2.1" fill="#fff" opacity="0.72"/><rect x="376.6" y="33.7" width="7.3" height="2.1" fill="#fff" opacity="0.72"/>
<path d="M403 19.8 H429.4 M403 28.8 H429.4 M411.5 10.4 V37.8 M420.8 10.4 V37.8" stroke="#fff" stroke-width="1.4" fill="none" opacity="0.8"/>
<path d="M405.3 24.2 C407.3 20 408.3 16.6 410.7 16.6 C414.3 16.6 417 32.4 421.6 32.4 C424 32.4 425.6 28.4 427.4 24.2" stroke="#e6c81e" stroke-width="2" fill="none"/>
<path d="M430.9 32.2 V38.3 H424.4 Z" fill="#fff"/>
<path d="M452.6 24.1 L455.4 19.1 H464.4 L467.2 24.1 L464.4 29.2 H455.4 Z" fill="#fff"/>
<path d="M453.5 16.0 L455.6 13.6 L457.6 16.0 L459.7 13.6 L461.8 16.0 L463.8 13.6 L465.9 16.0 L468.3 13.8 L469.1 16.8 L472.3 17.1 L470.4 19.7 L472.8 21.7 L470.4 23.8 L472.8 25.9 L470.4 27.9 L472.7 30.2 L469.7 31.2 L469.5 34.4 L466.9 32.6 L464.8 35.0 L462.8 32.6 L460.7 35.0 L458.6 32.6 L456.6 35.0 L454.5 32.6 L452.1 34.8 L451.3 31.8 L448.1 31.5 L450.0 28.9 L447.6 26.9 L450.0 24.8 L447.6 22.7 L450.0 20.7 L447.7 18.4 L450.7 17.4 L450.9 14.2 Z" fill="none" stroke="#f4dc00" stroke-width="1.9" stroke-linejoin="round"/>
<path d="M473.9 32.2 V38.3 H467.7 Z" fill="#fff"/>
<path d="M490 11.5 L503 18.8 L498.4 22.6 L504 29.5 L490 37.6 Z" fill="#f4dc00"/>
<path d="M494 11.9 H516.4 V33 M494 37 H509" fill="none" stroke="#fff" stroke-width="1.9" stroke-dasharray="2 2.05"/>
<path d="M517.6 32 V38.2 H510.6 Q516.4 37.4 517.6 32 Z" fill="#fff"/>
<path d="M546.7 10.8 H551.2 V37.8 H546.7 Z" fill="#fff"/>
<path d="M538.6 14.6 L541.6 12.8 H546.9 V16.4 H538.6 Z" fill="#fff"/>
<path d="M538.6 21 H546.9 V24.9 H543.4 Z" fill="#fff"/>
<path d="M551.9 16.6 h2.6 M551.9 20.6 h2.6" stroke="#fff" stroke-width="1.3" opacity="0.9"/>
<path d="M577.1 24.4 H580 C580.6 15.6 585.4 15.6 586.1 24.4 C587 7.2 593.6 7.2 594.5 24.4 C595.2 15.6 600.6 15.6 601.3 24.4 H603.8" stroke="#f4dc00" stroke-width="1.9" fill="none" stroke-linejoin="round"/>
<path d="M577.1 26.8 H603.8" stroke="#fff" stroke-width="1.6"/>
<text x="590.3" y="37.5" font-size="12.4" fill="#fff" font-weight="bold" text-anchor="middle" textLength="16.8" lengthAdjust="spacingAndGlyphs">FFT</text>
<rect x="620.9" y="11.1" width="26.4" height="15.3" rx="1" fill="#f0920f"/>
<path d="M624.6 11.8 L643.2 17.7 L624 25.4 Z" fill="#f2c21c"/>
<path d="M630 15 L643 17.7 L630 22 Z" fill="#ece02a" opacity="0.8"/>
<path d="M624.6 11.6 L643.4 17.7 L623.8 25.6" stroke="#23389a" stroke-width="1.5" fill="none" stroke-linejoin="round"/>
<path d="M628 25.2 H646" stroke="#e6d820" stroke-width="1.2" stroke-dasharray="1.6 1.6" opacity="0.8"/>
<text x="633.9" y="37.5" font-size="12.4" fill="#fff" font-weight="bold" text-anchor="middle" textLength="16.8" lengthAdjust="spacingAndGlyphs">FFT</text>
<text x="677.1" y="17" font-size="11.2" fill="#fff" font-weight="bold" text-anchor="middle" textLength="7.2" lengthAdjust="spacingAndGlyphs">T</text>
<path d="M663.6 19.4 L667.8 33.4 H685 L690 19 L692.6 21.4" stroke="#aab6f6" stroke-width="0.9" fill="none" opacity="0.8"/>
<path d="M663.6 33.4 C666 27 666.6 20 668.4 18.6 L671 20 L672.6 19.2 L677 20.2 L681 19.6 L685.6 20.6 C687.6 24 688 30 689.2 33.8 H692" stroke="#f4dc00" stroke-width="2.4" fill="none" stroke-linejoin="round"/>
<rect x="670.1" y="27.1" width="12.2" height="10.4" fill="#fff"/>
<path d="M670.1 32.9 H682.3" stroke="#b9bcc6" stroke-width="0.9"/>
<rect x="717.7" y="13.2" width="6.4" height="3" rx="0.8" fill="#fff"/>
<rect x="712.8" y="15.5" width="16.4" height="2" rx="0.6" fill="#fff"/>
<path d="M713.9 18.5 H728.1 V34 Q728.1 35.5 726.6 35.5 H715.4 Q713.9 35.5 713.9 34 Z" fill="#fff"/>
<path d="M717 20.2 V33 M721 20.2 V33 M725.2 20.2 V33" stroke="#20262d" stroke-width="2.4"/>
<rect x="1139.2" y="7.9" width="37" height="37" rx="5.5" fill="#475b6b"/>
<polygon points="1155.20,17.29 1155.49,13.46 1159.51,13.46 1159.80,17.29 1162.24,18.30 1165.16,15.80 1168.00,18.64 1165.50,21.56 1166.51,24.00 1170.34,24.29 1170.34,28.31 1166.51,28.60 1165.50,31.04 1168.00,33.96 1165.16,36.80 1162.24,34.30 1159.80,35.31 1159.51,39.14 1155.49,39.14 1155.20,35.31 1152.76,34.30 1149.84,36.80 1147.00,33.96 1149.50,31.04 1148.49,28.60 1144.66,28.31 1144.66,24.29 1148.49,24.00 1149.50,21.56 1147.00,18.64 1149.84,15.80 1152.76,18.30" fill="#fff" stroke="#fff" stroke-width="1.1" stroke-linejoin="round"/>
<circle cx="1157.5" cy="26.3" r="9.7" fill="#fff"/>
<circle cx="1157.5" cy="26.3" r="5.3" fill="#475b6b"/>
<rect x="1182.7" y="9.2" width="2.1" height="34" rx="1" fill="#9fafbb"/>
<rect x="1198.3" y="19.6" width="5.5" height="3.5" fill="#2bc62b"/><rect x="1192.5" y="28.3" width="5.5" height="3.8" fill="#2bc62b"/><rect x="1204.2" y="28.3" width="5.5" height="3.8" fill="#2bc62b"/>
<path d="M1191.6 25.8 H1210.8" stroke="#2bc62b" stroke-width="1" stroke-dasharray="2.4 1" opacity="0.85"/>
<path d="M1201 23 V26 M1195.2 26 V28.4 M1207 26 V28.4" stroke="#2bc62b" stroke-width="0.9" opacity="0.7"/>
<rect x="1217.1" y="12.1" width="31.2" height="27.1" fill="#d2200f"/>
<text x="1233.3" y="25" font-size="12.8" fill="#fff" font-weight="bold" text-anchor="middle" textLength="25.8" lengthAdjust="spacingAndGlyphs">HD</text>
<rect x="1220.4" y="27.9" width="25" height="7.5" fill="#fff"/>
<text x="1230.4" y="34.4" font-size="7" fill="#d2200f" font-weight="bold" text-anchor="middle" textLength="12.6" lengthAdjust="spacingAndGlyphs">16bit</text>
<path d="M1240.4 28 v7.4 M1242.2 28 v7.4 M1244 28 v7.4" stroke="#d2200f" stroke-width="0.9" opacity="0.85"/>
<path d="M1272.9 8.9 L1290 26 L1272.9 43.2 L1255.8 26 Z" fill="none" stroke="#10a0e8" stroke-width="2.2" stroke-linejoin="miter"/>
<path d="M1282 17.2 L1265.2 32.6" stroke="#10a0e8" stroke-width="1.8"/>
<text x="1268" y="26.6" font-size="11.5" fill="#10a0e8" font-weight="bold" text-anchor="middle">R</text>
<text x="1277.2" y="35" font-size="11.5" fill="#10a0e8" font-weight="bold" text-anchor="middle">S</text>
<rect x="1296" y="11.9" width="68.4" height="28.8" rx="6.5" fill="#fdb416" stroke="#f6e3b4" stroke-width="1.5"/>
<text x="1299.4" y="32.9" font-size="16.6" fill="#000" textLength="30" lengthAdjust="spacingAndGlyphs" stroke="#000" stroke-width="0.35">Info</text>
<path d="M1355.4 15.4 v22.2" stroke="#fdf0cf" stroke-width="1.3"/>
<path d="M1356.9 25.5 l2.4 -3.7 l2.4 3.7 Z M1356.9 29.5 l2.4 3.6 l2.4 -3.6 Z" fill="#fde9b4"/><rect x="72" y="766" width="1296" height="44" fill="url(#gBot)"/>
<rect x="72" y="766" width="42.8" height="44" fill="url(#gHi)"/>
<rect x="75.7" y="776.3" width="11" height="10.4" rx="2.4" fill="#fff"/>
<rect x="88.5" y="776.3" width="11" height="10.4" rx="2.4" fill="#fff"/>
<rect x="101.3" y="776.3" width="11" height="10.4" rx="2.4" fill="#fff"/>
<rect x="75.7" y="788.8" width="11" height="10.4" rx="2.4" fill="#fff"/>
<rect x="88.5" y="788.8" width="11" height="10.4" rx="2.4" fill="#fff"/>
<rect x="101.3" y="788.8" width="11" height="10.4" rx="2.4" fill="#fff"/>
<text x="126.6" y="795.6" font-size="19.2" fill="#fff" textLength="32" lengthAdjust="spacingAndGlyphs">File</text>
<text x="174" y="795.6" font-size="19.2" fill="#fff" textLength="97" lengthAdjust="spacingAndGlyphs">Horizontal</text>
<text x="287.6" y="795.6" font-size="19.2" fill="#fff" textLength="66" lengthAdjust="spacingAndGlyphs">Trigger</text>
<text x="369" y="795.6" font-size="19.2" fill="#fff" textLength="70" lengthAdjust="spacingAndGlyphs">Vertical</text>
<text x="456" y="795.6" font-size="19.2" fill="#fff" textLength="44" lengthAdjust="spacingAndGlyphs">Math</text>
<text x="516" y="795.6" font-size="19.2" fill="#fff" textLength="62.5" lengthAdjust="spacingAndGlyphs">Cursor</text>
<text x="595" y="795.6" font-size="19.2" fill="#fff" textLength="46" lengthAdjust="spacingAndGlyphs">Meas</text>
<text x="657.5" y="795.6" font-size="19.2" fill="#fff" textLength="56.5" lengthAdjust="spacingAndGlyphs">Masks</text>
<text x="730" y="795.6" font-size="19.2" fill="#fff" textLength="78.5" lengthAdjust="spacingAndGlyphs">Analysis</text>
<text x="824" y="795.6" font-size="19.2" fill="#fff" textLength="70" lengthAdjust="spacingAndGlyphs">Display</text>
<text x="910" y="795.6" font-size="19.2" fill="#fff" textLength="95" lengthAdjust="spacingAndGlyphs">Wave Gen</text>
<text x="1021.5" y="795.6" font-size="19.2" fill="#fff" textLength="87.5" lengthAdjust="spacingAndGlyphs">Pulse Src</text>
<text x="1125" y="795.6" font-size="19.2" fill="#fff" textLength="42.5" lengthAdjust="spacingAndGlyphs">User</text>
<rect x="120.0" y="772.6" width="1.2" height="27.4" fill="#74838e"/>
<rect x="169.0" y="772.6" width="1.2" height="27.4" fill="#74838e"/>
<rect x="282.4" y="772.6" width="1.2" height="27.4" fill="#74838e"/>
<rect x="363.9" y="772.6" width="1.2" height="27.4" fill="#74838e"/>
<rect x="450.9" y="772.6" width="1.2" height="27.4" fill="#74838e"/>
<rect x="511.4" y="772.6" width="1.2" height="27.4" fill="#74838e"/>
<rect x="589.9" y="772.6" width="1.2" height="27.4" fill="#74838e"/>
<rect x="652.4" y="772.6" width="1.2" height="27.4" fill="#74838e"/>
<rect x="724.9" y="772.6" width="1.2" height="27.4" fill="#74838e"/>
<rect x="819.9" y="772.6" width="1.2" height="27.4" fill="#74838e"/>
<rect x="904.9" y="772.6" width="1.2" height="27.4" fill="#74838e"/>
<rect x="1017.4" y="772.6" width="1.2" height="27.4" fill="#74838e"/>
<rect x="1119.9" y="772.6" width="1.2" height="27.4" fill="#74838e"/>
</svg>
</body></html>
